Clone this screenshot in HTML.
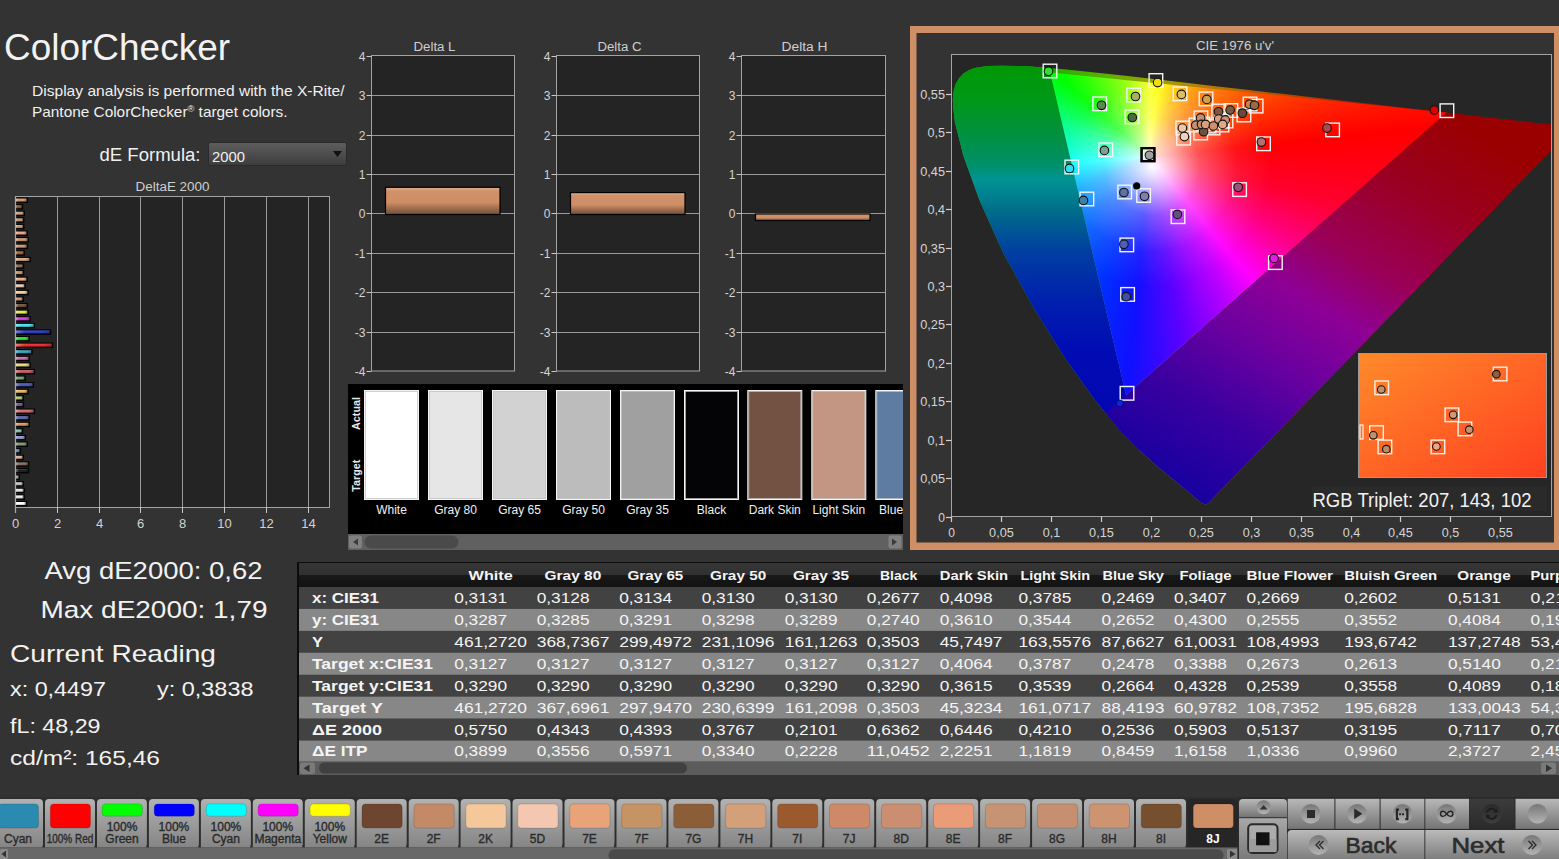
<!DOCTYPE html>
<html><head><meta charset="utf-8"><style>
html,body{margin:0;padding:0;}
body{width:1559px;height:859px;overflow:hidden;background:#333333;position:relative;font-family:"Liberation Sans", sans-serif;}
svg text{font-family:"Liberation Sans", sans-serif;}
</style></head><body>
<svg width="1559" height="859" style="position:absolute;left:0;top:0"><rect x="910" y="26" width="652" height="524" fill="#cf8f66"/><rect x="916.5" y="33" width="637.5" height="509.5" fill="#333333"/><rect x="951" y="54" width="601" height="463" fill="#262626"/></svg><div style="position:absolute;left:951px;top:54px;width:601px;height:463px;overflow:hidden">
<svg width="700" height="480" style="position:absolute;left:0;top:0"><defs>
<clipPath id="locclip"><path d="M256.7,449.8 L256.3,450.1 L255.6,450.4 L254.4,450.4 L252.1,449.6 L249.5,447.9 L246.0,445.2 L241.0,441.1 L234.6,435.7 L226.6,429.0 L216.0,420.4 L203.3,409.7 L187.7,395.7 L169.0,376.6 L144.2,346.6 L114.9,305.5 L83.0,254.5 L52.4,199.2 L28.5,146.2 L12.3,101.5 L3.9,68.3 L2.4,55.3 L1.8,45.2 L2.7,36.6 L5.0,29.3 L8.5,23.7 L12.7,19.2 L17.8,16.3 L23.5,14.1 L36.3,12.1 L50.4,11.7 L64.6,11.9 L79.5,12.6 L95.5,13.7 L112.9,15.3 L132.0,17.2 L153.2,19.5 L176.6,22.1 L202.6,25.0 L231.1,28.3 L262.2,31.9 L295.8,35.8 L331.3,39.8 L367.7,44.1 L403.1,48.1 L468.6,55.6 L519.6,61.5 L555.8,65.7 L582.3,68.7 L599.7,70.7 L610.1,71.9 L622.5,73.4 Z"/></clipPath>
<linearGradient id="lgL" gradientUnits="userSpaceOnUse" x1="0" y1="0" x2="0" y2="416"><stop offset="0" stop-color="#009800"/><stop offset="0.11" stop-color="#009818"/><stop offset="0.195" stop-color="#009040"/><stop offset="0.267" stop-color="#00906a"/><stop offset="0.303" stop-color="#009494"/><stop offset="0.375" stop-color="#006e8a"/><stop offset="0.471" stop-color="#0040a0"/><stop offset="0.591" stop-color="#0020ae"/><stop offset="0.71" stop-color="#000cb4"/><stop offset="1" stop-color="#0800b0"/></linearGradient>
<linearGradient id="lgR" gradientUnits="userSpaceOnUse" x1="495.4" y1="58.4" x2="256.7" y2="449.8"><stop offset="0" stop-color="#9a0000"/><stop offset="0.18" stop-color="#9a0020"/><stop offset="0.376" stop-color="#9a0058"/><stop offset="0.505" stop-color="#8e0096"/><stop offset="0.657" stop-color="#6a00a0"/><stop offset="0.816" stop-color="#3c00a0"/><stop offset="1" stop-color="#1800a0"/></linearGradient>
<linearGradient id="lgT" gradientUnits="userSpaceOnUse" x1="99.2" y1="0" x2="495.4" y2="0"><stop offset="0" stop-color="#20b000"/><stop offset="0.15" stop-color="#60b000"/><stop offset="0.27" stop-color="#a0a000"/><stop offset="0.45" stop-color="#b87000"/><stop offset="0.7" stop-color="#b03000"/><stop offset="1" stop-color="#a00000"/></linearGradient>
</defs><g clip-path="url(#locclip)"><rect x="-20" y="-20" width="740" height="520" fill="url(#lgT)"/><polygon points="90.2,-20.0 212.4,500.0 -20,500 -20,-20" fill="url(#lgL)"/><polygon points="584.2,-20.0 -4.9,500.0 720,500 720,-20" fill="url(#lgR)"/></g></svg>
<div style="position:absolute;left:0;top:0;width:700px;height:480px;clip-path:polygon(495.4px 58.4px, 99.2px 18.4px, 175.0px 341.2px);background:radial-gradient(circle at 200.8px 112.7px, rgba(255,255,255,1) 0px, rgba(255,255,255,0.72) 20px, rgba(255,255,255,0.32) 48px, rgba(255,255,255,0.08) 85px, rgba(255,255,255,0) 120px),conic-gradient(from 0deg at 197.8px 102.7px, #f8ff20 0deg, #ffff00 8deg, #ffc000 22deg, #ff8000 40deg, #ff4800 63deg, #ff0000 84deg, #ff0030 104deg, #ff0080 120deg, #ff00ff 140deg, #c000ff 150deg, #9000ff 160deg, #6000ff 169deg, #1010ff 185deg, #0030ff 200deg, #0060ff 222deg, #00a8ff 246deg, #00ffff 265deg, #00ff90 290deg, #00ff00 312deg, #90ff00 343deg, #f8ff20 360deg)"></div>
</div><svg class="ov" width="1559" height="859" style="position:absolute;left:0;top:0"><defs><linearGradient id="ddg" x1="0" y1="0" x2="0" y2="1"><stop offset="0" stop-color="#5e5e5e"/><stop offset="1" stop-color="#3c3c3c"/></linearGradient><linearGradient id="barg" x1="0" y1="0" x2="1" y2="0"><stop offset="0" stop-color="#fff" stop-opacity="0.35"/><stop offset="0.25" stop-color="#fff" stop-opacity="0"/><stop offset="0.75" stop-color="#000" stop-opacity="0"/><stop offset="1" stop-color="#000" stop-opacity="0.35"/></linearGradient><linearGradient id="dbarg" x1="0" y1="0" x2="0" y2="1"><stop offset="0" stop-color="#e0b090"/><stop offset="0.15" stop-color="#d09068"/><stop offset="0.55" stop-color="#cf8f66"/><stop offset="1" stop-color="#6e4c38"/></linearGradient><clipPath id="swclip"><rect x="348" y="384" width="555" height="150"/></clipPath><linearGradient id="insg" x1="0" y1="0" x2="1" y2="1"><stop offset="0" stop-color="#ff8a2a"/><stop offset="1" stop-color="#ff4020"/></linearGradient><linearGradient id="hdrg" x1="0" y1="0" x2="0" y2="1"><stop offset="0" stop-color="#363636"/><stop offset="0.5" stop-color="#303030"/><stop offset="0.52" stop-color="#181818"/><stop offset="1" stop-color="#121212"/></linearGradient><linearGradient id="tabg" x1="0" y1="0" x2="0" y2="1"><stop offset="0" stop-color="#b2b2b2"/><stop offset="1" stop-color="#858585"/></linearGradient><linearGradient id="btng" x1="0" y1="0" x2="0" y2="1"><stop offset="0" stop-color="#b8b8b8"/><stop offset="1" stop-color="#747474"/></linearGradient><linearGradient id="btng2" x1="0" y1="0" x2="0" y2="1"><stop offset="0" stop-color="#a8a8a8"/><stop offset="1" stop-color="#7a7a7a"/></linearGradient><linearGradient id="btng3" x1="0" y1="0" x2="0" y2="1"><stop offset="0" stop-color="#bababa"/><stop offset="1" stop-color="#7e7e7e"/></linearGradient><linearGradient id="darkg" x1="0" y1="0" x2="0" y2="1"><stop offset="0" stop-color="#3c3c3c"/><stop offset="1" stop-color="#2a2a2a"/></linearGradient><linearGradient id="circg" x1="0" y1="0" x2="0" y2="1"><stop offset="0" stop-color="#777"/><stop offset="1" stop-color="#b4b4b4"/></linearGradient><linearGradient id="circd" x1="0" y1="0" x2="0" y2="1"><stop offset="0" stop-color="#2a2a2a"/><stop offset="1" stop-color="#3e3e3e"/></linearGradient><linearGradient id="bargv" x1="0" y1="0" x2="0" y2="1"><stop offset="0" stop-color="#fff" stop-opacity="0.25"/><stop offset="0.5" stop-color="#fff" stop-opacity="0.05"/><stop offset="1" stop-color="#000" stop-opacity="0.3"/></linearGradient></defs><text x="4.0" y="60.0" font-size="37.5" fill="#f2f2f2" text-anchor="start" font-weight="normal" textLength="226.0" lengthAdjust="spacingAndGlyphs" >ColorChecker</text><text x="32.0" y="95.8" font-size="15" fill="#f0f0f0" text-anchor="start" font-weight="normal" textLength="312.5" lengthAdjust="spacingAndGlyphs" >Display analysis is performed with the X-Rite/</text><text x="32.0" y="116.6" font-size="15" fill="#f0f0f0" text-anchor="start" font-weight="normal" textLength="255.5" lengthAdjust="spacingAndGlyphs" >Pantone ColorChecker<tspan font-size="9" dy="-5">®</tspan><tspan dy="5"> target colors.</tspan></text><text x="99.5" y="160.8" font-size="18" fill="#f0f0f0" text-anchor="start" font-weight="normal" textLength="101.0" lengthAdjust="spacingAndGlyphs" >dE Formula:</text><rect x="208.5" y="142.5" width="138" height="23" rx="2" fill="url(#ddg)" stroke="#2a2a2a" stroke-width="1"/><text x="212.0" y="161.7" font-size="15" fill="#f0f0f0" text-anchor="start" font-weight="normal" textLength="33.0" lengthAdjust="spacingAndGlyphs" >2000</text><path d="M333,151 L342,151 L337.5,157 Z" fill="#111"/><text x="172.5" y="190.5" font-size="12" fill="#cfcfcf" text-anchor="middle" font-weight="normal" textLength="74.0" lengthAdjust="spacingAndGlyphs" >DeltaE 2000</text><rect x="15.5" y="196.5" width="314" height="311" fill="#242424" stroke="#a3a3a3" stroke-width="1"/><line x1="15.5" y1="507" x2="15.5" y2="513" stroke="#c8c8c8" stroke-width="1"/><text x="15.5" y="528.0" font-size="13" fill="#d2d2d2" text-anchor="middle" font-weight="normal" >0</text><line x1="57.5" y1="197" x2="57.5" y2="507" stroke="#9a9a9a" stroke-width="1"/><line x1="57.5" y1="507" x2="57.5" y2="513" stroke="#c8c8c8" stroke-width="1"/><text x="57.5" y="528.0" font-size="13" fill="#d2d2d2" text-anchor="middle" font-weight="normal" >2</text><line x1="99.5" y1="197" x2="99.5" y2="507" stroke="#9a9a9a" stroke-width="1"/><line x1="99.5" y1="507" x2="99.5" y2="513" stroke="#c8c8c8" stroke-width="1"/><text x="99.5" y="528.0" font-size="13" fill="#d2d2d2" text-anchor="middle" font-weight="normal" >4</text><line x1="140.5" y1="197" x2="140.5" y2="507" stroke="#9a9a9a" stroke-width="1"/><line x1="140.5" y1="507" x2="140.5" y2="513" stroke="#c8c8c8" stroke-width="1"/><text x="140.5" y="528.0" font-size="13" fill="#d2d2d2" text-anchor="middle" font-weight="normal" >6</text><line x1="182.5" y1="197" x2="182.5" y2="507" stroke="#9a9a9a" stroke-width="1"/><line x1="182.5" y1="507" x2="182.5" y2="513" stroke="#c8c8c8" stroke-width="1"/><text x="182.5" y="528.0" font-size="13" fill="#d2d2d2" text-anchor="middle" font-weight="normal" >8</text><line x1="224.5" y1="197" x2="224.5" y2="507" stroke="#9a9a9a" stroke-width="1"/><line x1="224.5" y1="507" x2="224.5" y2="513" stroke="#c8c8c8" stroke-width="1"/><text x="224.5" y="528.0" font-size="13" fill="#d2d2d2" text-anchor="middle" font-weight="normal" >10</text><line x1="266.5" y1="197" x2="266.5" y2="507" stroke="#9a9a9a" stroke-width="1"/><line x1="266.5" y1="507" x2="266.5" y2="513" stroke="#c8c8c8" stroke-width="1"/><text x="266.5" y="528.0" font-size="13" fill="#d2d2d2" text-anchor="middle" font-weight="normal" >12</text><line x1="308.5" y1="197" x2="308.5" y2="507" stroke="#9a9a9a" stroke-width="1"/><line x1="308.5" y1="507" x2="308.5" y2="513" stroke="#c8c8c8" stroke-width="1"/><text x="308.5" y="528.0" font-size="13" fill="#d2d2d2" text-anchor="middle" font-weight="normal" >14</text><rect x="16" y="197.40" width="12.1" height="5.6" fill="#050505"/><rect x="16" y="198.60" width="10.5" height="3.0" fill="#cf8f66"/><rect x="16" y="198.60" width="10.5" height="3.0" fill="url(#barg)"/><rect x="16" y="198.60" width="10.5" height="3.0" fill="url(#bargv)"/><rect x="16" y="204.00" width="7.2" height="5.6" fill="#050505"/><rect x="16" y="205.20" width="5.6" height="3.0" fill="#76502e"/><rect x="16" y="205.20" width="5.6" height="3.0" fill="url(#barg)"/><rect x="16" y="205.20" width="5.6" height="3.0" fill="url(#bargv)"/><rect x="16" y="210.59" width="9.0" height="5.6" fill="#050505"/><rect x="16" y="211.79" width="7.4" height="3.0" fill="#cc9470"/><rect x="16" y="211.79" width="7.4" height="3.0" fill="url(#barg)"/><rect x="16" y="211.79" width="7.4" height="3.0" fill="url(#bargv)"/><rect x="16" y="217.19" width="8.4" height="5.6" fill="#050505"/><rect x="16" y="218.39" width="6.8" height="3.0" fill="#c69070"/><rect x="16" y="218.39" width="6.8" height="3.0" fill="url(#barg)"/><rect x="16" y="218.39" width="6.8" height="3.0" fill="url(#bargv)"/><rect x="16" y="223.78" width="8.4" height="5.6" fill="#050505"/><rect x="16" y="224.98" width="6.8" height="3.0" fill="#c69472"/><rect x="16" y="224.98" width="6.8" height="3.0" fill="url(#barg)"/><rect x="16" y="224.98" width="6.8" height="3.0" fill="url(#bargv)"/><rect x="16" y="230.38" width="11.9" height="5.6" fill="#050505"/><rect x="16" y="231.58" width="10.3" height="3.0" fill="#ea9c78"/><rect x="16" y="231.58" width="10.3" height="3.0" fill="url(#barg)"/><rect x="16" y="231.58" width="10.3" height="3.0" fill="url(#bargv)"/><rect x="16" y="236.98" width="13.0" height="5.6" fill="#050505"/><rect x="16" y="238.18" width="11.4" height="3.0" fill="#cc8e70"/><rect x="16" y="238.18" width="11.4" height="3.0" fill="url(#barg)"/><rect x="16" y="238.18" width="11.4" height="3.0" fill="url(#bargv)"/><rect x="16" y="243.57" width="12.1" height="5.6" fill="#050505"/><rect x="16" y="244.77" width="10.5" height="3.0" fill="#ce8a68"/><rect x="16" y="244.77" width="10.5" height="3.0" fill="url(#barg)"/><rect x="16" y="244.77" width="10.5" height="3.0" fill="url(#bargv)"/><rect x="16" y="250.17" width="9.0" height="5.6" fill="#050505"/><rect x="16" y="251.37" width="7.4" height="3.0" fill="#9a5a2e"/><rect x="16" y="251.37" width="7.4" height="3.0" fill="url(#barg)"/><rect x="16" y="251.37" width="7.4" height="3.0" fill="url(#bargv)"/><rect x="16" y="256.76" width="14.9" height="5.6" fill="#050505"/><rect x="16" y="257.96" width="13.3" height="3.0" fill="#d4a07a"/><rect x="16" y="257.96" width="13.3" height="3.0" fill="url(#barg)"/><rect x="16" y="257.96" width="13.3" height="3.0" fill="url(#bargv)"/><rect x="16" y="263.36" width="8.2" height="5.6" fill="#050505"/><rect x="16" y="264.56" width="6.6" height="3.0" fill="#8c5e38"/><rect x="16" y="264.56" width="6.6" height="3.0" fill="url(#barg)"/><rect x="16" y="264.56" width="6.6" height="3.0" fill="url(#bargv)"/><rect x="16" y="269.96" width="8.2" height="5.6" fill="#050505"/><rect x="16" y="271.16" width="6.6" height="3.0" fill="#c69464"/><rect x="16" y="271.16" width="6.6" height="3.0" fill="url(#barg)"/><rect x="16" y="271.16" width="6.6" height="3.0" fill="url(#bargv)"/><rect x="16" y="276.55" width="11.9" height="5.6" fill="#050505"/><rect x="16" y="277.75" width="10.3" height="3.0" fill="#e8a478"/><rect x="16" y="277.75" width="10.3" height="3.0" fill="url(#barg)"/><rect x="16" y="277.75" width="10.3" height="3.0" fill="url(#bargv)"/><rect x="16" y="283.15" width="9.8" height="5.6" fill="#050505"/><rect x="16" y="284.35" width="8.2" height="3.0" fill="#f4c8b0"/><rect x="16" y="284.35" width="8.2" height="3.0" fill="url(#barg)"/><rect x="16" y="284.35" width="8.2" height="3.0" fill="url(#bargv)"/><rect x="16" y="289.74" width="12.8" height="5.6" fill="#050505"/><rect x="16" y="290.94" width="11.2" height="3.0" fill="#f4c89a"/><rect x="16" y="290.94" width="11.2" height="3.0" fill="url(#barg)"/><rect x="16" y="290.94" width="11.2" height="3.0" fill="url(#bargv)"/><rect x="16" y="296.34" width="7.9" height="5.6" fill="#050505"/><rect x="16" y="297.54" width="6.3" height="3.0" fill="#c48a68"/><rect x="16" y="297.54" width="6.3" height="3.0" fill="url(#barg)"/><rect x="16" y="297.54" width="6.3" height="3.0" fill="url(#bargv)"/><rect x="16" y="302.94" width="12.1" height="5.6" fill="#050505"/><rect x="16" y="304.14" width="10.5" height="3.0" fill="#6e4630"/><rect x="16" y="304.14" width="10.5" height="3.0" fill="url(#barg)"/><rect x="16" y="304.14" width="10.5" height="3.0" fill="url(#bargv)"/><rect x="16" y="309.53" width="12.8" height="5.6" fill="#050505"/><rect x="16" y="310.73" width="11.2" height="3.0" fill="#e8e840"/><rect x="16" y="310.73" width="11.2" height="3.0" fill="url(#barg)"/><rect x="16" y="310.73" width="11.2" height="3.0" fill="url(#bargv)"/><rect x="16" y="316.13" width="14.9" height="5.6" fill="#050505"/><rect x="16" y="317.33" width="13.3" height="3.0" fill="#d030d0"/><rect x="16" y="317.33" width="13.3" height="3.0" fill="url(#barg)"/><rect x="16" y="317.33" width="13.3" height="3.0" fill="url(#bargv)"/><rect x="16" y="322.72" width="19.1" height="5.6" fill="#050505"/><rect x="16" y="323.92" width="17.5" height="3.0" fill="#30e0f0"/><rect x="16" y="323.92" width="17.5" height="3.0" fill="url(#barg)"/><rect x="16" y="323.92" width="17.5" height="3.0" fill="url(#bargv)"/><rect x="16" y="329.32" width="35.2" height="5.6" fill="#050505"/><rect x="16" y="330.52" width="33.6" height="3.0" fill="#1828d0"/><rect x="16" y="330.52" width="33.6" height="3.0" fill="url(#barg)"/><rect x="16" y="330.52" width="33.6" height="3.0" fill="url(#bargv)"/><rect x="16" y="335.92" width="13.9" height="5.6" fill="#050505"/><rect x="16" y="337.12" width="12.3" height="3.0" fill="#20e020"/><rect x="16" y="337.12" width="12.3" height="3.0" fill="url(#barg)"/><rect x="16" y="337.12" width="12.3" height="3.0" fill="url(#bargv)"/><rect x="16" y="342.51" width="37.2" height="5.6" fill="#050505"/><rect x="16" y="343.71" width="35.6" height="3.0" fill="#e81818"/><rect x="16" y="343.71" width="35.6" height="3.0" fill="url(#barg)"/><rect x="16" y="343.71" width="35.6" height="3.0" fill="url(#bargv)"/><rect x="16" y="349.11" width="16.7" height="5.6" fill="#050505"/><rect x="16" y="350.31" width="15.1" height="3.0" fill="#2a9ec0"/><rect x="16" y="350.31" width="15.1" height="3.0" fill="url(#barg)"/><rect x="16" y="350.31" width="15.1" height="3.0" fill="url(#bargv)"/><rect x="16" y="355.70" width="13.9" height="5.6" fill="#050505"/><rect x="16" y="356.90" width="12.3" height="3.0" fill="#c860a8"/><rect x="16" y="356.90" width="12.3" height="3.0" fill="url(#barg)"/><rect x="16" y="356.90" width="12.3" height="3.0" fill="url(#bargv)"/><rect x="16" y="362.30" width="14.9" height="5.6" fill="#050505"/><rect x="16" y="363.50" width="13.3" height="3.0" fill="#e8d870"/><rect x="16" y="363.50" width="13.3" height="3.0" fill="url(#barg)"/><rect x="16" y="363.50" width="13.3" height="3.0" fill="url(#bargv)"/><rect x="16" y="368.90" width="19.1" height="5.6" fill="#050505"/><rect x="16" y="370.10" width="17.5" height="3.0" fill="#c85058"/><rect x="16" y="370.10" width="17.5" height="3.0" fill="url(#barg)"/><rect x="16" y="370.10" width="17.5" height="3.0" fill="url(#bargv)"/><rect x="16" y="375.49" width="9.8" height="5.6" fill="#050505"/><rect x="16" y="376.69" width="8.2" height="3.0" fill="#60a060"/><rect x="16" y="376.69" width="8.2" height="3.0" fill="url(#barg)"/><rect x="16" y="376.69" width="8.2" height="3.0" fill="url(#bargv)"/><rect x="16" y="382.09" width="18.1" height="5.6" fill="#050505"/><rect x="16" y="383.29" width="16.5" height="3.0" fill="#4050b0"/><rect x="16" y="383.29" width="16.5" height="3.0" fill="url(#barg)"/><rect x="16" y="383.29" width="16.5" height="3.0" fill="url(#bargv)"/><rect x="16" y="388.68" width="12.8" height="5.6" fill="#050505"/><rect x="16" y="389.88" width="11.2" height="3.0" fill="#e8b050"/><rect x="16" y="389.88" width="11.2" height="3.0" fill="url(#barg)"/><rect x="16" y="389.88" width="11.2" height="3.0" fill="url(#bargv)"/><rect x="16" y="395.28" width="7.9" height="5.6" fill="#050505"/><rect x="16" y="396.48" width="6.3" height="3.0" fill="#a8c860"/><rect x="16" y="396.48" width="6.3" height="3.0" fill="url(#barg)"/><rect x="16" y="396.48" width="6.3" height="3.0" fill="url(#bargv)"/><rect x="16" y="401.88" width="8.2" height="5.6" fill="#050505"/><rect x="16" y="403.08" width="6.6" height="3.0" fill="#6a5090"/><rect x="16" y="403.08" width="6.6" height="3.0" fill="url(#barg)"/><rect x="16" y="403.08" width="6.6" height="3.0" fill="url(#bargv)"/><rect x="16" y="408.47" width="19.1" height="5.6" fill="#050505"/><rect x="16" y="409.67" width="17.5" height="3.0" fill="#c86068"/><rect x="16" y="409.67" width="17.5" height="3.0" fill="url(#barg)"/><rect x="16" y="409.67" width="17.5" height="3.0" fill="url(#bargv)"/><rect x="16" y="415.07" width="13.9" height="5.6" fill="#050505"/><rect x="16" y="416.27" width="12.3" height="3.0" fill="#5060b0"/><rect x="16" y="416.27" width="12.3" height="3.0" fill="url(#barg)"/><rect x="16" y="416.27" width="12.3" height="3.0" fill="url(#bargv)"/><rect x="16" y="421.66" width="14.0" height="5.6" fill="#050505"/><rect x="16" y="422.86" width="12.4" height="3.0" fill="#d89050"/><rect x="16" y="422.86" width="12.4" height="3.0" fill="url(#barg)"/><rect x="16" y="422.86" width="12.4" height="3.0" fill="url(#bargv)"/><rect x="16" y="428.26" width="7.2" height="5.6" fill="#050505"/><rect x="16" y="429.46" width="5.6" height="3.0" fill="#70c0b0"/><rect x="16" y="429.46" width="5.6" height="3.0" fill="url(#barg)"/><rect x="16" y="429.46" width="5.6" height="3.0" fill="url(#bargv)"/><rect x="16" y="434.86" width="10.1" height="5.6" fill="#050505"/><rect x="16" y="436.06" width="8.5" height="3.0" fill="#9090d0"/><rect x="16" y="436.06" width="8.5" height="3.0" fill="url(#barg)"/><rect x="16" y="436.06" width="8.5" height="3.0" fill="url(#bargv)"/><rect x="16" y="441.45" width="12.0" height="5.6" fill="#050505"/><rect x="16" y="442.65" width="10.4" height="3.0" fill="#78906a"/><rect x="16" y="442.65" width="10.4" height="3.0" fill="url(#barg)"/><rect x="16" y="442.65" width="10.4" height="3.0" fill="url(#bargv)"/><rect x="16" y="448.05" width="5.1" height="5.6" fill="#050505"/><rect x="16" y="449.25" width="3.5" height="3.0" fill="#6080b0"/><rect x="16" y="449.25" width="3.5" height="3.0" fill="url(#barg)"/><rect x="16" y="449.25" width="3.5" height="3.0" fill="url(#bargv)"/><rect x="16" y="454.64" width="8.0" height="5.6" fill="#050505"/><rect x="16" y="455.84" width="6.4" height="3.0" fill="#d8a890"/><rect x="16" y="455.84" width="6.4" height="3.0" fill="url(#barg)"/><rect x="16" y="455.84" width="6.4" height="3.0" fill="url(#bargv)"/><rect x="16" y="461.24" width="13.3" height="5.6" fill="#050505"/><rect x="16" y="462.44" width="11.7" height="3.0" fill="#806050"/><rect x="16" y="462.44" width="11.7" height="3.0" fill="url(#barg)"/><rect x="16" y="462.44" width="11.7" height="3.0" fill="url(#bargv)"/><rect x="16" y="467.84" width="13.3" height="5.6" fill="#050505"/><rect x="16" y="469.04" width="11.7" height="3.0" fill="#101010"/><rect x="16" y="469.04" width="11.7" height="3.0" fill="url(#barg)"/><rect x="16" y="469.04" width="11.7" height="3.0" fill="url(#bargv)"/><rect x="16" y="474.43" width="4.0" height="5.6" fill="#050505"/><rect x="16" y="475.63" width="2.4" height="3.0" fill="#a0a0a0"/><rect x="16" y="475.63" width="2.4" height="3.0" fill="url(#barg)"/><rect x="16" y="475.63" width="2.4" height="3.0" fill="url(#bargv)"/><rect x="16" y="481.03" width="8.0" height="5.6" fill="#050505"/><rect x="16" y="482.23" width="6.4" height="3.0" fill="#c0c0c0"/><rect x="16" y="482.23" width="6.4" height="3.0" fill="url(#barg)"/><rect x="16" y="482.23" width="6.4" height="3.0" fill="url(#bargv)"/><rect x="16" y="487.62" width="8.9" height="5.6" fill="#050505"/><rect x="16" y="488.82" width="7.3" height="3.0" fill="#e0e0e0"/><rect x="16" y="488.82" width="7.3" height="3.0" fill="url(#barg)"/><rect x="16" y="488.82" width="7.3" height="3.0" fill="url(#bargv)"/><rect x="16" y="494.22" width="8.9" height="5.6" fill="#050505"/><rect x="16" y="495.42" width="7.3" height="3.0" fill="#ececec"/><rect x="16" y="495.42" width="7.3" height="3.0" fill="url(#barg)"/><rect x="16" y="495.42" width="7.3" height="3.0" fill="url(#bargv)"/><rect x="16" y="500.82" width="11.2" height="5.6" fill="#050505"/><rect x="16" y="502.02" width="9.6" height="3.0" fill="#ffffff"/><rect x="16" y="502.02" width="9.6" height="3.0" fill="url(#barg)"/><rect x="16" y="502.02" width="9.6" height="3.0" fill="url(#bargv)"/><line x1="15.5" y1="197" x2="15.5" y2="513" stroke="#a8a8a8" stroke-width="1.2"/><text x="434.5" y="50.8" font-size="12" fill="#cfcfcf" text-anchor="middle" font-weight="normal" textLength="42.0" lengthAdjust="spacingAndGlyphs" >Delta L</text><rect x="371.5" y="55.5" width="143" height="315.5" fill="#242424" stroke="#a3a3a3" stroke-width="1"/><line x1="366.5" y1="56.5" x2="371.5" y2="56.5" stroke="#c8c8c8" stroke-width="1"/><text x="365.5" y="61.3" font-size="12" fill="#d4d4d4" text-anchor="end" font-weight="normal" >4</text><line x1="371.5" y1="95.5" x2="514.5" y2="95.5" stroke="#9a9a9a" stroke-width="1"/><line x1="366.5" y1="95.5" x2="371.5" y2="95.5" stroke="#c8c8c8" stroke-width="1"/><text x="365.5" y="100.3" font-size="12" fill="#d4d4d4" text-anchor="end" font-weight="normal" >3</text><line x1="371.5" y1="135.5" x2="514.5" y2="135.5" stroke="#9a9a9a" stroke-width="1"/><line x1="366.5" y1="135.5" x2="371.5" y2="135.5" stroke="#c8c8c8" stroke-width="1"/><text x="365.5" y="140.3" font-size="12" fill="#d4d4d4" text-anchor="end" font-weight="normal" >2</text><line x1="371.5" y1="174.5" x2="514.5" y2="174.5" stroke="#9a9a9a" stroke-width="1"/><line x1="366.5" y1="174.5" x2="371.5" y2="174.5" stroke="#c8c8c8" stroke-width="1"/><text x="365.5" y="179.3" font-size="12" fill="#d4d4d4" text-anchor="end" font-weight="normal" >1</text><line x1="371.5" y1="213.5" x2="514.5" y2="213.5" stroke="#9a9a9a" stroke-width="1"/><line x1="366.5" y1="213.5" x2="371.5" y2="213.5" stroke="#c8c8c8" stroke-width="1"/><text x="365.5" y="218.3" font-size="12" fill="#d4d4d4" text-anchor="end" font-weight="normal" >0</text><line x1="371.5" y1="253.5" x2="514.5" y2="253.5" stroke="#9a9a9a" stroke-width="1"/><line x1="366.5" y1="253.5" x2="371.5" y2="253.5" stroke="#c8c8c8" stroke-width="1"/><text x="365.5" y="258.3" font-size="12" fill="#d4d4d4" text-anchor="end" font-weight="normal" >-1</text><line x1="371.5" y1="292.5" x2="514.5" y2="292.5" stroke="#9a9a9a" stroke-width="1"/><line x1="366.5" y1="292.5" x2="371.5" y2="292.5" stroke="#c8c8c8" stroke-width="1"/><text x="365.5" y="297.3" font-size="12" fill="#d4d4d4" text-anchor="end" font-weight="normal" >-2</text><line x1="371.5" y1="332.5" x2="514.5" y2="332.5" stroke="#9a9a9a" stroke-width="1"/><line x1="366.5" y1="332.5" x2="371.5" y2="332.5" stroke="#c8c8c8" stroke-width="1"/><text x="365.5" y="337.3" font-size="12" fill="#d4d4d4" text-anchor="end" font-weight="normal" >-3</text><line x1="366.5" y1="371.5" x2="371.5" y2="371.5" stroke="#c8c8c8" stroke-width="1"/><text x="365.5" y="376.3" font-size="12" fill="#d4d4d4" text-anchor="end" font-weight="normal" >-4</text><rect x="385.5" y="187.3" width="114.5" height="27.2" fill="url(#dbarg)" stroke="#000" stroke-width="1.2"/><text x="619.5" y="50.8" font-size="12" fill="#cfcfcf" text-anchor="middle" font-weight="normal" textLength="44.0" lengthAdjust="spacingAndGlyphs" >Delta C</text><rect x="556.5" y="55.5" width="143" height="315.5" fill="#242424" stroke="#a3a3a3" stroke-width="1"/><line x1="551.5" y1="56.5" x2="556.5" y2="56.5" stroke="#c8c8c8" stroke-width="1"/><text x="550.5" y="61.3" font-size="12" fill="#d4d4d4" text-anchor="end" font-weight="normal" >4</text><line x1="556.5" y1="95.5" x2="699.5" y2="95.5" stroke="#9a9a9a" stroke-width="1"/><line x1="551.5" y1="95.5" x2="556.5" y2="95.5" stroke="#c8c8c8" stroke-width="1"/><text x="550.5" y="100.3" font-size="12" fill="#d4d4d4" text-anchor="end" font-weight="normal" >3</text><line x1="556.5" y1="135.5" x2="699.5" y2="135.5" stroke="#9a9a9a" stroke-width="1"/><line x1="551.5" y1="135.5" x2="556.5" y2="135.5" stroke="#c8c8c8" stroke-width="1"/><text x="550.5" y="140.3" font-size="12" fill="#d4d4d4" text-anchor="end" font-weight="normal" >2</text><line x1="556.5" y1="174.5" x2="699.5" y2="174.5" stroke="#9a9a9a" stroke-width="1"/><line x1="551.5" y1="174.5" x2="556.5" y2="174.5" stroke="#c8c8c8" stroke-width="1"/><text x="550.5" y="179.3" font-size="12" fill="#d4d4d4" text-anchor="end" font-weight="normal" >1</text><line x1="556.5" y1="213.5" x2="699.5" y2="213.5" stroke="#9a9a9a" stroke-width="1"/><line x1="551.5" y1="213.5" x2="556.5" y2="213.5" stroke="#c8c8c8" stroke-width="1"/><text x="550.5" y="218.3" font-size="12" fill="#d4d4d4" text-anchor="end" font-weight="normal" >0</text><line x1="556.5" y1="253.5" x2="699.5" y2="253.5" stroke="#9a9a9a" stroke-width="1"/><line x1="551.5" y1="253.5" x2="556.5" y2="253.5" stroke="#c8c8c8" stroke-width="1"/><text x="550.5" y="258.3" font-size="12" fill="#d4d4d4" text-anchor="end" font-weight="normal" >-1</text><line x1="556.5" y1="292.5" x2="699.5" y2="292.5" stroke="#9a9a9a" stroke-width="1"/><line x1="551.5" y1="292.5" x2="556.5" y2="292.5" stroke="#c8c8c8" stroke-width="1"/><text x="550.5" y="297.3" font-size="12" fill="#d4d4d4" text-anchor="end" font-weight="normal" >-2</text><line x1="556.5" y1="332.5" x2="699.5" y2="332.5" stroke="#9a9a9a" stroke-width="1"/><line x1="551.5" y1="332.5" x2="556.5" y2="332.5" stroke="#c8c8c8" stroke-width="1"/><text x="550.5" y="337.3" font-size="12" fill="#d4d4d4" text-anchor="end" font-weight="normal" >-3</text><line x1="551.5" y1="371.5" x2="556.5" y2="371.5" stroke="#c8c8c8" stroke-width="1"/><text x="550.5" y="376.3" font-size="12" fill="#d4d4d4" text-anchor="end" font-weight="normal" >-4</text><rect x="570.5" y="192.6" width="114.5" height="21.9" fill="url(#dbarg)" stroke="#000" stroke-width="1.2"/><text x="804.5" y="50.8" font-size="12" fill="#cfcfcf" text-anchor="middle" font-weight="normal" textLength="46.0" lengthAdjust="spacingAndGlyphs" >Delta H</text><rect x="741.5" y="55.5" width="144" height="315.5" fill="#242424" stroke="#a3a3a3" stroke-width="1"/><line x1="736.5" y1="56.5" x2="741.5" y2="56.5" stroke="#c8c8c8" stroke-width="1"/><text x="735.5" y="61.3" font-size="12" fill="#d4d4d4" text-anchor="end" font-weight="normal" >4</text><line x1="741.5" y1="95.5" x2="885.5" y2="95.5" stroke="#9a9a9a" stroke-width="1"/><line x1="736.5" y1="95.5" x2="741.5" y2="95.5" stroke="#c8c8c8" stroke-width="1"/><text x="735.5" y="100.3" font-size="12" fill="#d4d4d4" text-anchor="end" font-weight="normal" >3</text><line x1="741.5" y1="135.5" x2="885.5" y2="135.5" stroke="#9a9a9a" stroke-width="1"/><line x1="736.5" y1="135.5" x2="741.5" y2="135.5" stroke="#c8c8c8" stroke-width="1"/><text x="735.5" y="140.3" font-size="12" fill="#d4d4d4" text-anchor="end" font-weight="normal" >2</text><line x1="741.5" y1="174.5" x2="885.5" y2="174.5" stroke="#9a9a9a" stroke-width="1"/><line x1="736.5" y1="174.5" x2="741.5" y2="174.5" stroke="#c8c8c8" stroke-width="1"/><text x="735.5" y="179.3" font-size="12" fill="#d4d4d4" text-anchor="end" font-weight="normal" >1</text><line x1="741.5" y1="213.5" x2="885.5" y2="213.5" stroke="#9a9a9a" stroke-width="1"/><line x1="736.5" y1="213.5" x2="741.5" y2="213.5" stroke="#c8c8c8" stroke-width="1"/><text x="735.5" y="218.3" font-size="12" fill="#d4d4d4" text-anchor="end" font-weight="normal" >0</text><line x1="741.5" y1="253.5" x2="885.5" y2="253.5" stroke="#9a9a9a" stroke-width="1"/><line x1="736.5" y1="253.5" x2="741.5" y2="253.5" stroke="#c8c8c8" stroke-width="1"/><text x="735.5" y="258.3" font-size="12" fill="#d4d4d4" text-anchor="end" font-weight="normal" >-1</text><line x1="741.5" y1="292.5" x2="885.5" y2="292.5" stroke="#9a9a9a" stroke-width="1"/><line x1="736.5" y1="292.5" x2="741.5" y2="292.5" stroke="#c8c8c8" stroke-width="1"/><text x="735.5" y="297.3" font-size="12" fill="#d4d4d4" text-anchor="end" font-weight="normal" >-2</text><line x1="741.5" y1="332.5" x2="885.5" y2="332.5" stroke="#9a9a9a" stroke-width="1"/><line x1="736.5" y1="332.5" x2="741.5" y2="332.5" stroke="#c8c8c8" stroke-width="1"/><text x="735.5" y="337.3" font-size="12" fill="#d4d4d4" text-anchor="end" font-weight="normal" >-3</text><line x1="736.5" y1="371.5" x2="741.5" y2="371.5" stroke="#c8c8c8" stroke-width="1"/><text x="735.5" y="376.3" font-size="12" fill="#d4d4d4" text-anchor="end" font-weight="normal" >-4</text><rect x="755.5" y="214.0" width="114.5" height="6.5" fill="url(#dbarg)" stroke="#000" stroke-width="1.2"/><rect x="348" y="384" width="555" height="150" fill="#000"/><text x="0" y="0" font-size="11" font-weight="bold" fill="#e8e8e8" text-anchor="middle" transform="translate(359.8,413.5) rotate(-90)" textLength="33" lengthAdjust="spacingAndGlyphs">Actual</text><text x="0" y="0" font-size="11" font-weight="bold" fill="#e8e8e8" text-anchor="middle" transform="translate(359.8,475.7) rotate(-90)" textLength="32" lengthAdjust="spacingAndGlyphs">Target</text><g clip-path="url(#swclip)"><rect x="364.5" y="390.5" width="54" height="109" fill="#ffffff" stroke="#f4f4f4" stroke-width="1"/><rect x="365.5" y="391.5" width="52" height="107" fill="none" stroke="#c4c4c4" stroke-width="0.8"/><text x="391.5" y="514.0" font-size="12" fill="#f0f0f0" text-anchor="middle" font-weight="normal" >White</text><rect x="428.5" y="390.5" width="54" height="109" fill="#e6e6e6" stroke="#f4f4f4" stroke-width="1"/><rect x="429.5" y="391.5" width="52" height="107" fill="none" stroke="#c4c4c4" stroke-width="0.8"/><text x="455.5" y="514.0" font-size="12" fill="#f0f0f0" text-anchor="middle" font-weight="normal" >Gray 80</text><rect x="492.5" y="390.5" width="54" height="109" fill="#d2d2d2" stroke="#f4f4f4" stroke-width="1"/><rect x="493.5" y="391.5" width="52" height="107" fill="none" stroke="#c4c4c4" stroke-width="0.8"/><text x="519.5" y="514.0" font-size="12" fill="#f0f0f0" text-anchor="middle" font-weight="normal" >Gray 65</text><rect x="556.5" y="390.5" width="54" height="109" fill="#bcbcbc" stroke="#f4f4f4" stroke-width="1"/><rect x="557.5" y="391.5" width="52" height="107" fill="none" stroke="#c4c4c4" stroke-width="0.8"/><text x="583.5" y="514.0" font-size="12" fill="#f0f0f0" text-anchor="middle" font-weight="normal" >Gray 50</text><rect x="620.5" y="390.5" width="54" height="109" fill="#a0a0a0" stroke="#f4f4f4" stroke-width="1"/><rect x="621.5" y="391.5" width="52" height="107" fill="none" stroke="#c4c4c4" stroke-width="0.8"/><text x="647.5" y="514.0" font-size="12" fill="#f0f0f0" text-anchor="middle" font-weight="normal" >Gray 35</text><rect x="684.5" y="390.5" width="54" height="109" fill="#040406" stroke="#f4f4f4" stroke-width="1"/><rect x="685.5" y="391.5" width="52" height="107" fill="none" stroke="#c4c4c4" stroke-width="0.8"/><text x="711.5" y="514.0" font-size="12" fill="#f0f0f0" text-anchor="middle" font-weight="normal" >Black</text><rect x="747.8" y="390.5" width="54" height="109" fill="#735244" stroke="#f4f4f4" stroke-width="1"/><rect x="748.8" y="391.5" width="52" height="107" fill="none" stroke="#c4c4c4" stroke-width="0.8"/><text x="774.8" y="514.0" font-size="12" fill="#f0f0f0" text-anchor="middle" font-weight="normal" >Dark Skin</text><rect x="811.8" y="390.5" width="54" height="109" fill="#c29682" stroke="#f4f4f4" stroke-width="1"/><rect x="812.8" y="391.5" width="52" height="107" fill="none" stroke="#c4c4c4" stroke-width="0.8"/><text x="838.8" y="514.0" font-size="12" fill="#f0f0f0" text-anchor="middle" font-weight="normal" >Light Skin</text><rect x="875.8" y="390.5" width="54" height="109" fill="#5e7ba2" stroke="#f4f4f4" stroke-width="1"/><rect x="876.8" y="391.5" width="52" height="107" fill="none" stroke="#c4c4c4" stroke-width="0.8"/><text x="902.8" y="514.0" font-size="12" fill="#f0f0f0" text-anchor="middle" font-weight="normal" >Blue Sky</text></g><rect x="348" y="534" width="555" height="16" fill="#606060"/><rect x="349" y="535.5" width="13" height="13" rx="2" fill="#808080"/><path d="M353,542 L358,538.5 L358,545.5 Z" fill="#3a3a3a"/><rect x="364.5" y="535.5" width="94" height="13" rx="6.5" fill="#4a4a4a"/><rect x="888.5" y="535.5" width="13" height="13" rx="2" fill="#808080"/><path d="M897,542 L892,538.5 L892,545.5 Z" fill="#3a3a3a"/><text x="44.5" y="579.3" font-size="24.5" fill="#f2f2f2" text-anchor="start" font-weight="normal" textLength="218.0" lengthAdjust="spacingAndGlyphs" >Avg dE2000: 0,62</text><text x="40.5" y="617.9" font-size="24.5" fill="#f2f2f2" text-anchor="start" font-weight="normal" textLength="227.0" lengthAdjust="spacingAndGlyphs" >Max dE2000: 1,79</text><text x="10.0" y="662.3" font-size="24" fill="#f2f2f2" text-anchor="start" font-weight="normal" textLength="206.0" lengthAdjust="spacingAndGlyphs" >Current Reading</text><text x="10.0" y="695.8" font-size="20" fill="#f2f2f2" text-anchor="start" font-weight="normal" textLength="96.0" lengthAdjust="spacingAndGlyphs" >x: 0,4497</text><text x="157.0" y="695.8" font-size="20" fill="#f2f2f2" text-anchor="start" font-weight="normal" textLength="96.5" lengthAdjust="spacingAndGlyphs" >y: 0,3838</text><text x="10.0" y="733.0" font-size="20" fill="#f2f2f2" text-anchor="start" font-weight="normal" textLength="90.5" lengthAdjust="spacingAndGlyphs" >fL: 48,29</text><text x="10.0" y="765.0" font-size="20" fill="#f2f2f2" text-anchor="start" font-weight="normal" textLength="150.0" lengthAdjust="spacingAndGlyphs" >cd/m²: 165,46</text><text x="1235.0" y="50.4" font-size="12" fill="#cfcfcf" text-anchor="middle" font-weight="normal" textLength="78.0" lengthAdjust="spacingAndGlyphs" >CIE 1976 u'v'</text><rect x="951.5" y="54.5" width="600" height="462" fill="none" stroke="#a3a3a3" stroke-width="1"/><line x1="946" y1="517.5" x2="951.5" y2="517.5" stroke="#d0d0d0" stroke-width="1.2"/><text x="945.0" y="521.9" font-size="12.5" fill="#d4d4d4" text-anchor="end" font-weight="normal" textLength="6.7" lengthAdjust="spacingAndGlyphs" >0</text><line x1="951.5" y1="516.5" x2="951.5" y2="522" stroke="#d0d0d0" stroke-width="1.2"/><text x="951.5" y="537.0" font-size="12.5" fill="#d4d4d4" text-anchor="middle" font-weight="normal" textLength="6.7" lengthAdjust="spacingAndGlyphs" >0</text><line x1="946" y1="478.5" x2="951.5" y2="478.5" stroke="#d0d0d0" stroke-width="1.2"/><text x="945.0" y="482.9" font-size="12.5" fill="#d4d4d4" text-anchor="end" font-weight="normal" textLength="24.8" lengthAdjust="spacingAndGlyphs" >0,05</text><line x1="1001.5" y1="516.5" x2="1001.5" y2="522" stroke="#d0d0d0" stroke-width="1.2"/><text x="1001.5" y="537.0" font-size="12.5" fill="#d4d4d4" text-anchor="middle" font-weight="normal" textLength="24.8" lengthAdjust="spacingAndGlyphs" >0,05</text><line x1="946" y1="440.5" x2="951.5" y2="440.5" stroke="#d0d0d0" stroke-width="1.2"/><text x="945.0" y="444.9" font-size="12.5" fill="#d4d4d4" text-anchor="end" font-weight="normal" textLength="17.5" lengthAdjust="spacingAndGlyphs" >0,1</text><line x1="1051.5" y1="516.5" x2="1051.5" y2="522" stroke="#d0d0d0" stroke-width="1.2"/><text x="1051.5" y="537.0" font-size="12.5" fill="#d4d4d4" text-anchor="middle" font-weight="normal" textLength="17.5" lengthAdjust="spacingAndGlyphs" >0,1</text><line x1="946" y1="401.5" x2="951.5" y2="401.5" stroke="#d0d0d0" stroke-width="1.2"/><text x="945.0" y="405.9" font-size="12.5" fill="#d4d4d4" text-anchor="end" font-weight="normal" textLength="24.8" lengthAdjust="spacingAndGlyphs" >0,15</text><line x1="1101.5" y1="516.5" x2="1101.5" y2="522" stroke="#d0d0d0" stroke-width="1.2"/><text x="1101.5" y="537.0" font-size="12.5" fill="#d4d4d4" text-anchor="middle" font-weight="normal" textLength="24.8" lengthAdjust="spacingAndGlyphs" >0,15</text><line x1="946" y1="363.5" x2="951.5" y2="363.5" stroke="#d0d0d0" stroke-width="1.2"/><text x="945.0" y="367.9" font-size="12.5" fill="#d4d4d4" text-anchor="end" font-weight="normal" textLength="17.5" lengthAdjust="spacingAndGlyphs" >0,2</text><line x1="1151.5" y1="516.5" x2="1151.5" y2="522" stroke="#d0d0d0" stroke-width="1.2"/><text x="1151.5" y="537.0" font-size="12.5" fill="#d4d4d4" text-anchor="middle" font-weight="normal" textLength="17.5" lengthAdjust="spacingAndGlyphs" >0,2</text><line x1="946" y1="324.5" x2="951.5" y2="324.5" stroke="#d0d0d0" stroke-width="1.2"/><text x="945.0" y="328.9" font-size="12.5" fill="#d4d4d4" text-anchor="end" font-weight="normal" textLength="24.8" lengthAdjust="spacingAndGlyphs" >0,25</text><line x1="1201.5" y1="516.5" x2="1201.5" y2="522" stroke="#d0d0d0" stroke-width="1.2"/><text x="1201.5" y="537.0" font-size="12.5" fill="#d4d4d4" text-anchor="middle" font-weight="normal" textLength="24.8" lengthAdjust="spacingAndGlyphs" >0,25</text><line x1="946" y1="286.5" x2="951.5" y2="286.5" stroke="#d0d0d0" stroke-width="1.2"/><text x="945.0" y="290.9" font-size="12.5" fill="#d4d4d4" text-anchor="end" font-weight="normal" textLength="17.5" lengthAdjust="spacingAndGlyphs" >0,3</text><line x1="1251.5" y1="516.5" x2="1251.5" y2="522" stroke="#d0d0d0" stroke-width="1.2"/><text x="1251.5" y="537.0" font-size="12.5" fill="#d4d4d4" text-anchor="middle" font-weight="normal" textLength="17.5" lengthAdjust="spacingAndGlyphs" >0,3</text><line x1="946" y1="248.5" x2="951.5" y2="248.5" stroke="#d0d0d0" stroke-width="1.2"/><text x="945.0" y="252.9" font-size="12.5" fill="#d4d4d4" text-anchor="end" font-weight="normal" textLength="24.8" lengthAdjust="spacingAndGlyphs" >0,35</text><line x1="1301.5" y1="516.5" x2="1301.5" y2="522" stroke="#d0d0d0" stroke-width="1.2"/><text x="1301.5" y="537.0" font-size="12.5" fill="#d4d4d4" text-anchor="middle" font-weight="normal" textLength="24.8" lengthAdjust="spacingAndGlyphs" >0,35</text><line x1="946" y1="209.5" x2="951.5" y2="209.5" stroke="#d0d0d0" stroke-width="1.2"/><text x="945.0" y="213.9" font-size="12.5" fill="#d4d4d4" text-anchor="end" font-weight="normal" textLength="17.5" lengthAdjust="spacingAndGlyphs" >0,4</text><line x1="1351.5" y1="516.5" x2="1351.5" y2="522" stroke="#d0d0d0" stroke-width="1.2"/><text x="1351.5" y="537.0" font-size="12.5" fill="#d4d4d4" text-anchor="middle" font-weight="normal" textLength="17.5" lengthAdjust="spacingAndGlyphs" >0,4</text><line x1="946" y1="171.5" x2="951.5" y2="171.5" stroke="#d0d0d0" stroke-width="1.2"/><text x="945.0" y="175.9" font-size="12.5" fill="#d4d4d4" text-anchor="end" font-weight="normal" textLength="24.8" lengthAdjust="spacingAndGlyphs" >0,45</text><line x1="1400.5" y1="516.5" x2="1400.5" y2="522" stroke="#d0d0d0" stroke-width="1.2"/><text x="1400.5" y="537.0" font-size="12.5" fill="#d4d4d4" text-anchor="middle" font-weight="normal" textLength="24.8" lengthAdjust="spacingAndGlyphs" >0,45</text><line x1="946" y1="132.5" x2="951.5" y2="132.5" stroke="#d0d0d0" stroke-width="1.2"/><text x="945.0" y="136.9" font-size="12.5" fill="#d4d4d4" text-anchor="end" font-weight="normal" textLength="17.5" lengthAdjust="spacingAndGlyphs" >0,5</text><line x1="1450.5" y1="516.5" x2="1450.5" y2="522" stroke="#d0d0d0" stroke-width="1.2"/><text x="1450.5" y="537.0" font-size="12.5" fill="#d4d4d4" text-anchor="middle" font-weight="normal" textLength="17.5" lengthAdjust="spacingAndGlyphs" >0,5</text><line x1="946" y1="94.5" x2="951.5" y2="94.5" stroke="#d0d0d0" stroke-width="1.2"/><text x="945.0" y="98.9" font-size="12.5" fill="#d4d4d4" text-anchor="end" font-weight="normal" textLength="24.8" lengthAdjust="spacingAndGlyphs" >0,55</text><line x1="1500.5" y1="516.5" x2="1500.5" y2="522" stroke="#d0d0d0" stroke-width="1.2"/><text x="1500.5" y="537.0" font-size="12.5" fill="#d4d4d4" text-anchor="middle" font-weight="normal" textLength="24.8" lengthAdjust="spacingAndGlyphs" >0,55</text><rect x="1043.2" y="64.2" width="13.6" height="13.6" fill="none" stroke="#f4f4f4" stroke-width="1.4"/><rect x="1149.1" y="73.7" width="13.6" height="13.6" fill="none" stroke="#f4f4f4" stroke-width="1.4"/><rect x="1092.9" y="97.0" width="13.6" height="13.6" fill="none" stroke="#f4f4f4" stroke-width="1.4"/><rect x="1126.9" y="88.3" width="13.6" height="13.6" fill="none" stroke="#f4f4f4" stroke-width="1.4"/><rect x="1125.2" y="110.1" width="13.6" height="13.6" fill="none" stroke="#f4f4f4" stroke-width="1.4"/><rect x="1099.0" y="143.0" width="13.6" height="13.6" fill="none" stroke="#f4f4f4" stroke-width="1.4"/><rect x="1065.0" y="160.2" width="13.6" height="13.6" fill="none" stroke="#f4f4f4" stroke-width="1.4"/><rect x="1117.9" y="185.2" width="13.6" height="13.6" fill="none" stroke="#f4f4f4" stroke-width="1.4"/><rect x="1136.8" y="188.7" width="13.6" height="13.6" fill="none" stroke="#f4f4f4" stroke-width="1.4"/><rect x="1080.1" y="192.2" width="13.6" height="13.6" fill="none" stroke="#f4f4f4" stroke-width="1.4"/><rect x="1171.2" y="209.9" width="13.6" height="13.6" fill="none" stroke="#f4f4f4" stroke-width="1.4"/><rect x="1120.0" y="238.1" width="13.6" height="13.6" fill="none" stroke="#f4f4f4" stroke-width="1.4"/><rect x="1232.8" y="182.8" width="13.6" height="13.6" fill="none" stroke="#f4f4f4" stroke-width="1.4"/><rect x="1120.8" y="287.6" width="13.6" height="13.6" fill="none" stroke="#f4f4f4" stroke-width="1.4"/><rect x="1440.1" y="103.9" width="13.6" height="13.6" fill="none" stroke="#f4f4f4" stroke-width="1.4"/><rect x="1325.8" y="123.1" width="13.6" height="13.6" fill="none" stroke="#f4f4f4" stroke-width="1.4"/><rect x="1256.7" y="137.0" width="13.6" height="13.6" fill="none" stroke="#f4f4f4" stroke-width="1.4"/><rect x="1268.6" y="255.8" width="13.6" height="13.6" fill="none" stroke="#f4f4f4" stroke-width="1.4"/><rect x="1173.2" y="87.0" width="13.6" height="13.6" fill="none" stroke="#f4f4f4" stroke-width="1.4"/><rect x="1199.2" y="92.1" width="13.6" height="13.6" fill="none" stroke="#f4f4f4" stroke-width="1.4"/><rect x="1194.1" y="111.1" width="13.6" height="13.6" fill="none" stroke="#f4f4f4" stroke-width="1.4"/><rect x="1211.9" y="104.2" width="13.6" height="13.6" fill="none" stroke="#f4f4f4" stroke-width="1.4"/><rect x="1224.1" y="103.7" width="13.6" height="13.6" fill="none" stroke="#f4f4f4" stroke-width="1.4"/><rect x="1237.1" y="108.2" width="13.6" height="13.6" fill="none" stroke="#f4f4f4" stroke-width="1.4"/><rect x="1243.2" y="97.2" width="13.6" height="13.6" fill="none" stroke="#f4f4f4" stroke-width="1.4"/><rect x="1249.3" y="99.3" width="13.6" height="13.6" fill="none" stroke="#f4f4f4" stroke-width="1.4"/><rect x="1176.0" y="121.2" width="13.6" height="13.6" fill="none" stroke="#f4f4f4" stroke-width="1.4"/><rect x="1176.8" y="131.4" width="13.6" height="13.6" fill="none" stroke="#f4f4f4" stroke-width="1.4"/><rect x="1193.9" y="126.2" width="13.6" height="13.6" fill="none" stroke="#f4f4f4" stroke-width="1.4"/><rect x="1189.2" y="118.2" width="13.6" height="13.6" fill="none" stroke="#f4f4f4" stroke-width="1.4"/><rect x="1196.2" y="117.2" width="13.6" height="13.6" fill="none" stroke="#f4f4f4" stroke-width="1.4"/><rect x="1202.2" y="119.2" width="13.6" height="13.6" fill="none" stroke="#f4f4f4" stroke-width="1.4"/><rect x="1206.2" y="121.2" width="13.6" height="13.6" fill="none" stroke="#f4f4f4" stroke-width="1.4"/><rect x="1215.2" y="114.2" width="13.6" height="13.6" fill="none" stroke="#f4f4f4" stroke-width="1.4"/><rect x="1219.2" y="114.2" width="13.6" height="13.6" fill="none" stroke="#f4f4f4" stroke-width="1.4"/><rect x="1215.2" y="118.2" width="13.6" height="13.6" fill="none" stroke="#f4f4f4" stroke-width="1.4"/><rect x="1141.6" y="148.3" width="12.8" height="12.8" fill="none" stroke="#000" stroke-width="2.6"/><rect x="1143.4" y="150.1" width="9.2" height="9.2" fill="none" stroke="#f4f4f4" stroke-width="1"/><circle cx="1048.5" cy="71.2" r="4.3" fill="#30e030" stroke="#111" stroke-width="1.1"/><circle cx="1157.6" cy="82.6" r="4.3" fill="#f0e000" stroke="#111" stroke-width="1.1"/><circle cx="1101.5" cy="105.3" r="4.3" fill="#5a8a50" stroke="#111" stroke-width="1.1"/><circle cx="1135.5" cy="96.5" r="4.3" fill="#a8b060" stroke="#111" stroke-width="1.1"/><circle cx="1132.3" cy="117.5" r="4.3" fill="#4a6a3a" stroke="#111" stroke-width="1.1"/><circle cx="1104.4" cy="150.4" r="4.3" fill="#80a090" stroke="#111" stroke-width="1.1"/><circle cx="1069.5" cy="168.4" r="4.3" fill="#30e0f0" stroke="#111" stroke-width="1.1"/><circle cx="1123.9" cy="192.5" r="4.3" fill="#6070a0" stroke="#111" stroke-width="1.1"/><circle cx="1144.5" cy="196.3" r="4.3" fill="#8080b0" stroke="#111" stroke-width="1.1"/><circle cx="1083.4" cy="200.4" r="4.3" fill="#3a80a0" stroke="#111" stroke-width="1.1"/><circle cx="1177.4" cy="214.4" r="4.3" fill="#605080" stroke="#111" stroke-width="1.1"/><circle cx="1123.9" cy="244.3" r="4.3" fill="#5060b0" stroke="#111" stroke-width="1.1"/><circle cx="1238.2" cy="187.3" r="4.3" fill="#a05080" stroke="#111" stroke-width="1.1"/><circle cx="1126.2" cy="296.7" r="4.3" fill="#4050a0" stroke="#111" stroke-width="1.1"/><circle cx="1434.3" cy="110.0" r="4.3" fill="#e00000" stroke="#111" stroke-width="1.1"/><circle cx="1327.0" cy="128.1" r="4.3" fill="#b04848" stroke="#111" stroke-width="1.1"/><circle cx="1261.4" cy="142.1" r="4.3" fill="#b07070" stroke="#111" stroke-width="1.1"/><circle cx="1274.0" cy="258.4" r="4.3" fill="#e020e0" stroke="#111" stroke-width="1.1"/><circle cx="1181.4" cy="94.4" r="4.3" fill="#d8c060" stroke="#111" stroke-width="1.1"/><circle cx="1206.8" cy="99.4" r="4.3" fill="#d0a050" stroke="#111" stroke-width="1.1"/><circle cx="1200.6" cy="117.9" r="4.3" fill="#c09070" stroke="#111" stroke-width="1.1"/><circle cx="1218.5" cy="111.8" r="4.3" fill="#805840" stroke="#111" stroke-width="1.1"/><circle cx="1230.1" cy="110.1" r="4.3" fill="#7a5a40" stroke="#111" stroke-width="1.1"/><circle cx="1242.4" cy="113.2" r="4.3" fill="#6a4a38" stroke="#111" stroke-width="1.1"/><circle cx="1249.6" cy="104.2" r="4.3" fill="#c08850" stroke="#111" stroke-width="1.1"/><circle cx="1254.5" cy="105.3" r="4.3" fill="#986a48" stroke="#111" stroke-width="1.1"/><circle cx="1182.4" cy="128.1" r="4.3" fill="#e8c8a8" stroke="#111" stroke-width="1.1"/><circle cx="1184.4" cy="136.6" r="4.3" fill="#f0d0c0" stroke="#111" stroke-width="1.1"/><circle cx="1203.6" cy="131.7" r="4.3" fill="#705040" stroke="#111" stroke-width="1.1"/><circle cx="1195.8" cy="125.2" r="4.3" fill="#c89070" stroke="#111" stroke-width="1.1"/><circle cx="1201.5" cy="124.4" r="4.3" fill="#c09070" stroke="#111" stroke-width="1.1"/><circle cx="1205.6" cy="124.4" r="4.3" fill="#d8a080" stroke="#111" stroke-width="1.1"/><circle cx="1213.4" cy="126.0" r="4.3" fill="#d09070" stroke="#111" stroke-width="1.1"/><circle cx="1218.7" cy="119.1" r="4.3" fill="#d8a080" stroke="#111" stroke-width="1.1"/><circle cx="1225.2" cy="119.9" r="4.3" fill="#c89070" stroke="#111" stroke-width="1.1"/><circle cx="1222.7" cy="124.4" r="4.3" fill="#e0a888" stroke="#111" stroke-width="1.1"/><circle cx="1149.5" cy="155.3" r="4.3" fill="#a0a0a0" stroke="#111" stroke-width="1.1"/><circle cx="1136.7" cy="185.9" r="3.6" fill="#000"/><rect x="1120.2" y="386.5" width="13.6" height="13.6" fill="none" stroke="#f4f4f4" stroke-width="1.4"/><circle cx="1119.8" cy="403.4" r="3.4" fill="#1020f0" stroke="#000a60" stroke-width="0.8"/><rect x="1358.5" y="353.5" width="188" height="124" fill="url(#insg)" stroke="#9a9a9a" stroke-width="1"/><rect x="1493.3" y="367.2" width="13.6" height="13.6" fill="none" stroke="#f8f0e8" stroke-width="1.4"/><rect x="1374.9" y="381.0" width="13.6" height="13.6" fill="none" stroke="#f8f0e8" stroke-width="1.4"/><rect x="1445.1" y="408.0" width="13.6" height="13.6" fill="none" stroke="#f8f0e8" stroke-width="1.4"/><rect x="1458.1" y="422.1" width="13.6" height="13.6" fill="none" stroke="#f8f0e8" stroke-width="1.4"/><rect x="1369.7" y="425.8" width="13.6" height="13.6" fill="none" stroke="#f8f0e8" stroke-width="1.4"/><rect x="1378.1" y="440.1" width="13.6" height="13.6" fill="none" stroke="#f8f0e8" stroke-width="1.4"/><rect x="1431.1" y="440.1" width="13.6" height="13.6" fill="none" stroke="#f8f0e8" stroke-width="1.4"/><circle cx="1496.3" cy="374.2" r="3.8" fill="#8a6040" stroke="#111" stroke-width="1.1"/><circle cx="1381.3" cy="389.5" r="3.8" fill="#c09070" stroke="#111" stroke-width="1.1"/><circle cx="1453.2" cy="414.8" r="3.8" fill="#d09878" stroke="#111" stroke-width="1.1"/><circle cx="1469.3" cy="429.7" r="3.8" fill="#c89070" stroke="#111" stroke-width="1.1"/><circle cx="1373.3" cy="435.3" r="3.8" fill="#c09070" stroke="#111" stroke-width="1.1"/><circle cx="1386.3" cy="449.2" r="3.8" fill="#c08c68" stroke="#111" stroke-width="1.1"/><circle cx="1436.4" cy="446.5" r="3.8" fill="#e8a888" stroke="#111" stroke-width="1.1"/><rect x="1360" y="425" width="3" height="14" fill="none" stroke="#f8f0e8" stroke-width="1.2"/><rect x="1312" y="486" width="235" height="25" fill="#2a2a2a"/><text x="1312.5" y="506.6" font-size="19.5" fill="#f2f2f2" text-anchor="start" font-weight="normal" textLength="219.0" lengthAdjust="spacingAndGlyphs" >RGB Triplet: 207, 143, 102</text><rect x="297" y="562" width="1262" height="213" fill="#0c0c0c"/><rect x="299" y="563" width="1260" height="24" fill="url(#hdrg)"/><rect x="299" y="587.00" width="1260" height="22.23" fill="#424242"/><rect x="299" y="608.93" width="1260" height="22.23" fill="#878787"/><rect x="299" y="630.86" width="1260" height="22.23" fill="#424242"/><rect x="299" y="652.79" width="1260" height="22.23" fill="#878787"/><rect x="299" y="674.72" width="1260" height="22.23" fill="#424242"/><rect x="299" y="696.65" width="1260" height="22.23" fill="#878787"/><rect x="299" y="718.58" width="1260" height="22.23" fill="#424242"/><rect x="299" y="740.51" width="1260" height="22.23" fill="#878787"/><text x="490.7" y="579.8" font-size="12.5" fill="#f4f4f4" text-anchor="middle" font-weight="bold" textLength="44.3" lengthAdjust="spacingAndGlyphs" >White</text><text x="572.9" y="579.8" font-size="12.5" fill="#f4f4f4" text-anchor="middle" font-weight="bold" textLength="56.7" lengthAdjust="spacingAndGlyphs" >Gray 80</text><text x="655.4" y="579.8" font-size="12.5" fill="#f4f4f4" text-anchor="middle" font-weight="bold" textLength="55.9" lengthAdjust="spacingAndGlyphs" >Gray 65</text><text x="738.1" y="579.8" font-size="12.5" fill="#f4f4f4" text-anchor="middle" font-weight="bold" textLength="56.2" lengthAdjust="spacingAndGlyphs" >Gray 50</text><text x="821.0" y="579.8" font-size="12.5" fill="#f4f4f4" text-anchor="middle" font-weight="bold" textLength="56.2" lengthAdjust="spacingAndGlyphs" >Gray 35</text><text x="898.6" y="579.8" font-size="12.5" fill="#f4f4f4" text-anchor="middle" font-weight="bold" textLength="37.3" lengthAdjust="spacingAndGlyphs" >Black</text><text x="973.9" y="579.8" font-size="12.5" fill="#f4f4f4" text-anchor="middle" font-weight="bold" textLength="68.3" lengthAdjust="spacingAndGlyphs" >Dark Skin</text><text x="1055.2" y="579.8" font-size="12.5" fill="#f4f4f4" text-anchor="middle" font-weight="bold" textLength="69.6" lengthAdjust="spacingAndGlyphs" >Light Skin</text><text x="1133.2" y="579.8" font-size="12.5" fill="#f4f4f4" text-anchor="middle" font-weight="bold" textLength="61.5" lengthAdjust="spacingAndGlyphs" >Blue Sky</text><text x="1205.5" y="579.8" font-size="12.5" fill="#f4f4f4" text-anchor="middle" font-weight="bold" textLength="52.1" lengthAdjust="spacingAndGlyphs" >Foliage</text><text x="1289.8" y="579.8" font-size="12.5" fill="#f4f4f4" text-anchor="middle" font-weight="bold" textLength="86.4" lengthAdjust="spacingAndGlyphs" >Blue Flower</text><text x="1390.7" y="579.8" font-size="12.5" fill="#f4f4f4" text-anchor="middle" font-weight="bold" textLength="93.0" lengthAdjust="spacingAndGlyphs" >Bluish Green</text><text x="1484.0" y="579.8" font-size="12.5" fill="#f4f4f4" text-anchor="middle" font-weight="bold" textLength="53.3" lengthAdjust="spacingAndGlyphs" >Orange</text><text x="1578.0" y="579.8" font-size="12.5" fill="#f4f4f4" text-anchor="middle" font-weight="bold" textLength="95.0" lengthAdjust="spacingAndGlyphs" >Purplish Blue</text><text x="312.0" y="602.9" font-size="14" fill="#f4f4f4" text-anchor="start" font-weight="bold" textLength="67.0" lengthAdjust="spacingAndGlyphs" >x: CIE31</text><text x="454.2" y="602.9" font-size="14.3" fill="#f4f4f4" text-anchor="start" font-weight="normal" textLength="52.9" lengthAdjust="spacingAndGlyphs" >0,3131</text><text x="536.7" y="602.9" font-size="14.3" fill="#f4f4f4" text-anchor="start" font-weight="normal" textLength="52.9" lengthAdjust="spacingAndGlyphs" >0,3128</text><text x="619.2" y="602.9" font-size="14.3" fill="#f4f4f4" text-anchor="start" font-weight="normal" textLength="52.9" lengthAdjust="spacingAndGlyphs" >0,3134</text><text x="701.7" y="602.9" font-size="14.3" fill="#f4f4f4" text-anchor="start" font-weight="normal" textLength="52.9" lengthAdjust="spacingAndGlyphs" >0,3130</text><text x="784.7" y="602.9" font-size="14.3" fill="#f4f4f4" text-anchor="start" font-weight="normal" textLength="52.9" lengthAdjust="spacingAndGlyphs" >0,3130</text><text x="866.8" y="602.9" font-size="14.3" fill="#f4f4f4" text-anchor="start" font-weight="normal" textLength="52.9" lengthAdjust="spacingAndGlyphs" >0,2677</text><text x="939.7" y="602.9" font-size="14.3" fill="#f4f4f4" text-anchor="start" font-weight="normal" textLength="52.9" lengthAdjust="spacingAndGlyphs" >0,4098</text><text x="1018.4" y="602.9" font-size="14.3" fill="#f4f4f4" text-anchor="start" font-weight="normal" textLength="52.9" lengthAdjust="spacingAndGlyphs" >0,3785</text><text x="1101.6" y="602.9" font-size="14.3" fill="#f4f4f4" text-anchor="start" font-weight="normal" textLength="52.9" lengthAdjust="spacingAndGlyphs" >0,2469</text><text x="1174.0" y="602.9" font-size="14.3" fill="#f4f4f4" text-anchor="start" font-weight="normal" textLength="52.9" lengthAdjust="spacingAndGlyphs" >0,3407</text><text x="1246.6" y="602.9" font-size="14.3" fill="#f4f4f4" text-anchor="start" font-weight="normal" textLength="52.9" lengthAdjust="spacingAndGlyphs" >0,2669</text><text x="1344.2" y="602.9" font-size="14.3" fill="#f4f4f4" text-anchor="start" font-weight="normal" textLength="52.9" lengthAdjust="spacingAndGlyphs" >0,2602</text><text x="1447.9" y="602.9" font-size="14.3" fill="#f4f4f4" text-anchor="start" font-weight="normal" textLength="52.9" lengthAdjust="spacingAndGlyphs" >0,5131</text><text x="1530.6" y="602.9" font-size="14.3" fill="#f4f4f4" text-anchor="start" font-weight="normal" textLength="52.9" lengthAdjust="spacingAndGlyphs" >0,2117</text><text x="312.0" y="624.8" font-size="14" fill="#f4f4f4" text-anchor="start" font-weight="bold" textLength="67.0" lengthAdjust="spacingAndGlyphs" >y: CIE31</text><text x="454.2" y="624.8" font-size="14.3" fill="#f4f4f4" text-anchor="start" font-weight="normal" textLength="52.9" lengthAdjust="spacingAndGlyphs" >0,3287</text><text x="536.7" y="624.8" font-size="14.3" fill="#f4f4f4" text-anchor="start" font-weight="normal" textLength="52.9" lengthAdjust="spacingAndGlyphs" >0,3285</text><text x="619.2" y="624.8" font-size="14.3" fill="#f4f4f4" text-anchor="start" font-weight="normal" textLength="52.9" lengthAdjust="spacingAndGlyphs" >0,3291</text><text x="701.7" y="624.8" font-size="14.3" fill="#f4f4f4" text-anchor="start" font-weight="normal" textLength="52.9" lengthAdjust="spacingAndGlyphs" >0,3298</text><text x="784.7" y="624.8" font-size="14.3" fill="#f4f4f4" text-anchor="start" font-weight="normal" textLength="52.9" lengthAdjust="spacingAndGlyphs" >0,3289</text><text x="866.8" y="624.8" font-size="14.3" fill="#f4f4f4" text-anchor="start" font-weight="normal" textLength="52.9" lengthAdjust="spacingAndGlyphs" >0,2740</text><text x="939.7" y="624.8" font-size="14.3" fill="#f4f4f4" text-anchor="start" font-weight="normal" textLength="52.9" lengthAdjust="spacingAndGlyphs" >0,3610</text><text x="1018.4" y="624.8" font-size="14.3" fill="#f4f4f4" text-anchor="start" font-weight="normal" textLength="52.9" lengthAdjust="spacingAndGlyphs" >0,3544</text><text x="1101.6" y="624.8" font-size="14.3" fill="#f4f4f4" text-anchor="start" font-weight="normal" textLength="52.9" lengthAdjust="spacingAndGlyphs" >0,2652</text><text x="1174.0" y="624.8" font-size="14.3" fill="#f4f4f4" text-anchor="start" font-weight="normal" textLength="52.9" lengthAdjust="spacingAndGlyphs" >0,4300</text><text x="1246.6" y="624.8" font-size="14.3" fill="#f4f4f4" text-anchor="start" font-weight="normal" textLength="52.9" lengthAdjust="spacingAndGlyphs" >0,2555</text><text x="1344.2" y="624.8" font-size="14.3" fill="#f4f4f4" text-anchor="start" font-weight="normal" textLength="52.9" lengthAdjust="spacingAndGlyphs" >0,3552</text><text x="1447.9" y="624.8" font-size="14.3" fill="#f4f4f4" text-anchor="start" font-weight="normal" textLength="52.9" lengthAdjust="spacingAndGlyphs" >0,4084</text><text x="1530.6" y="624.8" font-size="14.3" fill="#f4f4f4" text-anchor="start" font-weight="normal" textLength="52.9" lengthAdjust="spacingAndGlyphs" >0,1948</text><text x="312.0" y="646.8" font-size="14" fill="#f4f4f4" text-anchor="start" font-weight="bold" textLength="11.0" lengthAdjust="spacingAndGlyphs" >Y</text><text x="454.2" y="646.8" font-size="14.3" fill="#f4f4f4" text-anchor="start" font-weight="normal" textLength="72.7" lengthAdjust="spacingAndGlyphs" >461,2720</text><text x="536.7" y="646.8" font-size="14.3" fill="#f4f4f4" text-anchor="start" font-weight="normal" textLength="72.7" lengthAdjust="spacingAndGlyphs" >368,7367</text><text x="619.2" y="646.8" font-size="14.3" fill="#f4f4f4" text-anchor="start" font-weight="normal" textLength="72.7" lengthAdjust="spacingAndGlyphs" >299,4972</text><text x="701.7" y="646.8" font-size="14.3" fill="#f4f4f4" text-anchor="start" font-weight="normal" textLength="72.7" lengthAdjust="spacingAndGlyphs" >231,1096</text><text x="784.7" y="646.8" font-size="14.3" fill="#f4f4f4" text-anchor="start" font-weight="normal" textLength="72.7" lengthAdjust="spacingAndGlyphs" >161,1263</text><text x="866.8" y="646.8" font-size="14.3" fill="#f4f4f4" text-anchor="start" font-weight="normal" textLength="52.9" lengthAdjust="spacingAndGlyphs" >0,3503</text><text x="939.7" y="646.8" font-size="14.3" fill="#f4f4f4" text-anchor="start" font-weight="normal" textLength="62.8" lengthAdjust="spacingAndGlyphs" >45,7497</text><text x="1018.4" y="646.8" font-size="14.3" fill="#f4f4f4" text-anchor="start" font-weight="normal" textLength="72.7" lengthAdjust="spacingAndGlyphs" >163,5576</text><text x="1101.6" y="646.8" font-size="14.3" fill="#f4f4f4" text-anchor="start" font-weight="normal" textLength="62.8" lengthAdjust="spacingAndGlyphs" >87,6627</text><text x="1174.0" y="646.8" font-size="14.3" fill="#f4f4f4" text-anchor="start" font-weight="normal" textLength="62.8" lengthAdjust="spacingAndGlyphs" >61,0031</text><text x="1246.6" y="646.8" font-size="14.3" fill="#f4f4f4" text-anchor="start" font-weight="normal" textLength="72.7" lengthAdjust="spacingAndGlyphs" >108,4993</text><text x="1344.2" y="646.8" font-size="14.3" fill="#f4f4f4" text-anchor="start" font-weight="normal" textLength="72.7" lengthAdjust="spacingAndGlyphs" >193,6742</text><text x="1447.9" y="646.8" font-size="14.3" fill="#f4f4f4" text-anchor="start" font-weight="normal" textLength="72.7" lengthAdjust="spacingAndGlyphs" >137,2748</text><text x="1530.6" y="646.8" font-size="14.3" fill="#f4f4f4" text-anchor="start" font-weight="normal" textLength="62.8" lengthAdjust="spacingAndGlyphs" >53,4521</text><text x="312.0" y="668.7" font-size="14" fill="#f4f4f4" text-anchor="start" font-weight="bold" textLength="121.0" lengthAdjust="spacingAndGlyphs" >Target x:CIE31</text><text x="454.2" y="668.7" font-size="14.3" fill="#f4f4f4" text-anchor="start" font-weight="normal" textLength="52.9" lengthAdjust="spacingAndGlyphs" >0,3127</text><text x="536.7" y="668.7" font-size="14.3" fill="#f4f4f4" text-anchor="start" font-weight="normal" textLength="52.9" lengthAdjust="spacingAndGlyphs" >0,3127</text><text x="619.2" y="668.7" font-size="14.3" fill="#f4f4f4" text-anchor="start" font-weight="normal" textLength="52.9" lengthAdjust="spacingAndGlyphs" >0,3127</text><text x="701.7" y="668.7" font-size="14.3" fill="#f4f4f4" text-anchor="start" font-weight="normal" textLength="52.9" lengthAdjust="spacingAndGlyphs" >0,3127</text><text x="784.7" y="668.7" font-size="14.3" fill="#f4f4f4" text-anchor="start" font-weight="normal" textLength="52.9" lengthAdjust="spacingAndGlyphs" >0,3127</text><text x="866.8" y="668.7" font-size="14.3" fill="#f4f4f4" text-anchor="start" font-weight="normal" textLength="52.9" lengthAdjust="spacingAndGlyphs" >0,3127</text><text x="939.7" y="668.7" font-size="14.3" fill="#f4f4f4" text-anchor="start" font-weight="normal" textLength="52.9" lengthAdjust="spacingAndGlyphs" >0,4064</text><text x="1018.4" y="668.7" font-size="14.3" fill="#f4f4f4" text-anchor="start" font-weight="normal" textLength="52.9" lengthAdjust="spacingAndGlyphs" >0,3787</text><text x="1101.6" y="668.7" font-size="14.3" fill="#f4f4f4" text-anchor="start" font-weight="normal" textLength="52.9" lengthAdjust="spacingAndGlyphs" >0,2478</text><text x="1174.0" y="668.7" font-size="14.3" fill="#f4f4f4" text-anchor="start" font-weight="normal" textLength="52.9" lengthAdjust="spacingAndGlyphs" >0,3388</text><text x="1246.6" y="668.7" font-size="14.3" fill="#f4f4f4" text-anchor="start" font-weight="normal" textLength="52.9" lengthAdjust="spacingAndGlyphs" >0,2673</text><text x="1344.2" y="668.7" font-size="14.3" fill="#f4f4f4" text-anchor="start" font-weight="normal" textLength="52.9" lengthAdjust="spacingAndGlyphs" >0,2613</text><text x="1447.9" y="668.7" font-size="14.3" fill="#f4f4f4" text-anchor="start" font-weight="normal" textLength="52.9" lengthAdjust="spacingAndGlyphs" >0,5140</text><text x="1530.6" y="668.7" font-size="14.3" fill="#f4f4f4" text-anchor="start" font-weight="normal" textLength="52.9" lengthAdjust="spacingAndGlyphs" >0,2128</text><text x="312.0" y="690.6" font-size="14" fill="#f4f4f4" text-anchor="start" font-weight="bold" textLength="121.0" lengthAdjust="spacingAndGlyphs" >Target y:CIE31</text><text x="454.2" y="690.6" font-size="14.3" fill="#f4f4f4" text-anchor="start" font-weight="normal" textLength="52.9" lengthAdjust="spacingAndGlyphs" >0,3290</text><text x="536.7" y="690.6" font-size="14.3" fill="#f4f4f4" text-anchor="start" font-weight="normal" textLength="52.9" lengthAdjust="spacingAndGlyphs" >0,3290</text><text x="619.2" y="690.6" font-size="14.3" fill="#f4f4f4" text-anchor="start" font-weight="normal" textLength="52.9" lengthAdjust="spacingAndGlyphs" >0,3290</text><text x="701.7" y="690.6" font-size="14.3" fill="#f4f4f4" text-anchor="start" font-weight="normal" textLength="52.9" lengthAdjust="spacingAndGlyphs" >0,3290</text><text x="784.7" y="690.6" font-size="14.3" fill="#f4f4f4" text-anchor="start" font-weight="normal" textLength="52.9" lengthAdjust="spacingAndGlyphs" >0,3290</text><text x="866.8" y="690.6" font-size="14.3" fill="#f4f4f4" text-anchor="start" font-weight="normal" textLength="52.9" lengthAdjust="spacingAndGlyphs" >0,3290</text><text x="939.7" y="690.6" font-size="14.3" fill="#f4f4f4" text-anchor="start" font-weight="normal" textLength="52.9" lengthAdjust="spacingAndGlyphs" >0,3615</text><text x="1018.4" y="690.6" font-size="14.3" fill="#f4f4f4" text-anchor="start" font-weight="normal" textLength="52.9" lengthAdjust="spacingAndGlyphs" >0,3539</text><text x="1101.6" y="690.6" font-size="14.3" fill="#f4f4f4" text-anchor="start" font-weight="normal" textLength="52.9" lengthAdjust="spacingAndGlyphs" >0,2664</text><text x="1174.0" y="690.6" font-size="14.3" fill="#f4f4f4" text-anchor="start" font-weight="normal" textLength="52.9" lengthAdjust="spacingAndGlyphs" >0,4328</text><text x="1246.6" y="690.6" font-size="14.3" fill="#f4f4f4" text-anchor="start" font-weight="normal" textLength="52.9" lengthAdjust="spacingAndGlyphs" >0,2539</text><text x="1344.2" y="690.6" font-size="14.3" fill="#f4f4f4" text-anchor="start" font-weight="normal" textLength="52.9" lengthAdjust="spacingAndGlyphs" >0,3558</text><text x="1447.9" y="690.6" font-size="14.3" fill="#f4f4f4" text-anchor="start" font-weight="normal" textLength="52.9" lengthAdjust="spacingAndGlyphs" >0,4089</text><text x="1530.6" y="690.6" font-size="14.3" fill="#f4f4f4" text-anchor="start" font-weight="normal" textLength="52.9" lengthAdjust="spacingAndGlyphs" >0,1869</text><text x="312.0" y="712.5" font-size="14" fill="#f4f4f4" text-anchor="start" font-weight="bold" textLength="71.0" lengthAdjust="spacingAndGlyphs" >Target Y</text><text x="454.2" y="712.5" font-size="14.3" fill="#f4f4f4" text-anchor="start" font-weight="normal" textLength="72.7" lengthAdjust="spacingAndGlyphs" >461,2720</text><text x="536.7" y="712.5" font-size="14.3" fill="#f4f4f4" text-anchor="start" font-weight="normal" textLength="72.7" lengthAdjust="spacingAndGlyphs" >367,6961</text><text x="619.2" y="712.5" font-size="14.3" fill="#f4f4f4" text-anchor="start" font-weight="normal" textLength="72.7" lengthAdjust="spacingAndGlyphs" >297,9470</text><text x="701.7" y="712.5" font-size="14.3" fill="#f4f4f4" text-anchor="start" font-weight="normal" textLength="72.7" lengthAdjust="spacingAndGlyphs" >230,6399</text><text x="784.7" y="712.5" font-size="14.3" fill="#f4f4f4" text-anchor="start" font-weight="normal" textLength="72.7" lengthAdjust="spacingAndGlyphs" >161,2098</text><text x="866.8" y="712.5" font-size="14.3" fill="#f4f4f4" text-anchor="start" font-weight="normal" textLength="52.9" lengthAdjust="spacingAndGlyphs" >0,3503</text><text x="939.7" y="712.5" font-size="14.3" fill="#f4f4f4" text-anchor="start" font-weight="normal" textLength="62.8" lengthAdjust="spacingAndGlyphs" >45,3234</text><text x="1018.4" y="712.5" font-size="14.3" fill="#f4f4f4" text-anchor="start" font-weight="normal" textLength="72.7" lengthAdjust="spacingAndGlyphs" >161,0717</text><text x="1101.6" y="712.5" font-size="14.3" fill="#f4f4f4" text-anchor="start" font-weight="normal" textLength="62.8" lengthAdjust="spacingAndGlyphs" >88,4193</text><text x="1174.0" y="712.5" font-size="14.3" fill="#f4f4f4" text-anchor="start" font-weight="normal" textLength="62.8" lengthAdjust="spacingAndGlyphs" >60,9782</text><text x="1246.6" y="712.5" font-size="14.3" fill="#f4f4f4" text-anchor="start" font-weight="normal" textLength="72.7" lengthAdjust="spacingAndGlyphs" >108,7352</text><text x="1344.2" y="712.5" font-size="14.3" fill="#f4f4f4" text-anchor="start" font-weight="normal" textLength="72.7" lengthAdjust="spacingAndGlyphs" >195,6828</text><text x="1447.9" y="712.5" font-size="14.3" fill="#f4f4f4" text-anchor="start" font-weight="normal" textLength="72.7" lengthAdjust="spacingAndGlyphs" >133,0043</text><text x="1530.6" y="712.5" font-size="14.3" fill="#f4f4f4" text-anchor="start" font-weight="normal" textLength="62.8" lengthAdjust="spacingAndGlyphs" >54,3125</text><text x="312.0" y="734.5" font-size="14" fill="#f4f4f4" text-anchor="start" font-weight="bold" textLength="70.0" lengthAdjust="spacingAndGlyphs" >ΔE 2000</text><text x="454.2" y="734.5" font-size="14.3" fill="#f4f4f4" text-anchor="start" font-weight="normal" textLength="52.9" lengthAdjust="spacingAndGlyphs" >0,5750</text><text x="536.7" y="734.5" font-size="14.3" fill="#f4f4f4" text-anchor="start" font-weight="normal" textLength="52.9" lengthAdjust="spacingAndGlyphs" >0,4343</text><text x="619.2" y="734.5" font-size="14.3" fill="#f4f4f4" text-anchor="start" font-weight="normal" textLength="52.9" lengthAdjust="spacingAndGlyphs" >0,4393</text><text x="701.7" y="734.5" font-size="14.3" fill="#f4f4f4" text-anchor="start" font-weight="normal" textLength="52.9" lengthAdjust="spacingAndGlyphs" >0,3767</text><text x="784.7" y="734.5" font-size="14.3" fill="#f4f4f4" text-anchor="start" font-weight="normal" textLength="52.9" lengthAdjust="spacingAndGlyphs" >0,2101</text><text x="866.8" y="734.5" font-size="14.3" fill="#f4f4f4" text-anchor="start" font-weight="normal" textLength="52.9" lengthAdjust="spacingAndGlyphs" >0,6362</text><text x="939.7" y="734.5" font-size="14.3" fill="#f4f4f4" text-anchor="start" font-weight="normal" textLength="52.9" lengthAdjust="spacingAndGlyphs" >0,6446</text><text x="1018.4" y="734.5" font-size="14.3" fill="#f4f4f4" text-anchor="start" font-weight="normal" textLength="52.9" lengthAdjust="spacingAndGlyphs" >0,4210</text><text x="1101.6" y="734.5" font-size="14.3" fill="#f4f4f4" text-anchor="start" font-weight="normal" textLength="52.9" lengthAdjust="spacingAndGlyphs" >0,2536</text><text x="1174.0" y="734.5" font-size="14.3" fill="#f4f4f4" text-anchor="start" font-weight="normal" textLength="52.9" lengthAdjust="spacingAndGlyphs" >0,5903</text><text x="1246.6" y="734.5" font-size="14.3" fill="#f4f4f4" text-anchor="start" font-weight="normal" textLength="52.9" lengthAdjust="spacingAndGlyphs" >0,5137</text><text x="1344.2" y="734.5" font-size="14.3" fill="#f4f4f4" text-anchor="start" font-weight="normal" textLength="52.9" lengthAdjust="spacingAndGlyphs" >0,3195</text><text x="1447.9" y="734.5" font-size="14.3" fill="#f4f4f4" text-anchor="start" font-weight="normal" textLength="52.9" lengthAdjust="spacingAndGlyphs" >0,7117</text><text x="1530.6" y="734.5" font-size="14.3" fill="#f4f4f4" text-anchor="start" font-weight="normal" textLength="52.9" lengthAdjust="spacingAndGlyphs" >0,7041</text><text x="312.0" y="756.4" font-size="14" fill="#f4f4f4" text-anchor="start" font-weight="bold" textLength="55.5" lengthAdjust="spacingAndGlyphs" >ΔE ITP</text><text x="454.2" y="756.4" font-size="14.3" fill="#f4f4f4" text-anchor="start" font-weight="normal" textLength="52.9" lengthAdjust="spacingAndGlyphs" >0,3899</text><text x="536.7" y="756.4" font-size="14.3" fill="#f4f4f4" text-anchor="start" font-weight="normal" textLength="52.9" lengthAdjust="spacingAndGlyphs" >0,3556</text><text x="619.2" y="756.4" font-size="14.3" fill="#f4f4f4" text-anchor="start" font-weight="normal" textLength="52.9" lengthAdjust="spacingAndGlyphs" >0,5971</text><text x="701.7" y="756.4" font-size="14.3" fill="#f4f4f4" text-anchor="start" font-weight="normal" textLength="52.9" lengthAdjust="spacingAndGlyphs" >0,3340</text><text x="784.7" y="756.4" font-size="14.3" fill="#f4f4f4" text-anchor="start" font-weight="normal" textLength="52.9" lengthAdjust="spacingAndGlyphs" >0,2228</text><text x="866.8" y="756.4" font-size="14.3" fill="#f4f4f4" text-anchor="start" font-weight="normal" textLength="62.8" lengthAdjust="spacingAndGlyphs" >11,0452</text><text x="939.7" y="756.4" font-size="14.3" fill="#f4f4f4" text-anchor="start" font-weight="normal" textLength="52.9" lengthAdjust="spacingAndGlyphs" >2,2251</text><text x="1018.4" y="756.4" font-size="14.3" fill="#f4f4f4" text-anchor="start" font-weight="normal" textLength="52.9" lengthAdjust="spacingAndGlyphs" >1,1819</text><text x="1101.6" y="756.4" font-size="14.3" fill="#f4f4f4" text-anchor="start" font-weight="normal" textLength="52.9" lengthAdjust="spacingAndGlyphs" >0,8459</text><text x="1174.0" y="756.4" font-size="14.3" fill="#f4f4f4" text-anchor="start" font-weight="normal" textLength="52.9" lengthAdjust="spacingAndGlyphs" >1,6158</text><text x="1246.6" y="756.4" font-size="14.3" fill="#f4f4f4" text-anchor="start" font-weight="normal" textLength="52.9" lengthAdjust="spacingAndGlyphs" >1,0336</text><text x="1344.2" y="756.4" font-size="14.3" fill="#f4f4f4" text-anchor="start" font-weight="normal" textLength="52.9" lengthAdjust="spacingAndGlyphs" >0,9960</text><text x="1447.9" y="756.4" font-size="14.3" fill="#f4f4f4" text-anchor="start" font-weight="normal" textLength="52.9" lengthAdjust="spacingAndGlyphs" >2,3727</text><text x="1530.6" y="756.4" font-size="14.3" fill="#f4f4f4" text-anchor="start" font-weight="normal" textLength="52.9" lengthAdjust="spacingAndGlyphs" >2,4512</text><rect x="299" y="761.3" width="1260" height="13.7" fill="#5c5c5c"/><rect x="300" y="762.5" width="15" height="11.5" rx="2" fill="#7a7a7a"/><path d="M303.5,768.2 L309.5,764.5 L309.5,772 Z" fill="#333"/><rect x="319" y="762.6" width="368" height="11" rx="5.5" fill="#404040"/><rect x="1541" y="762.5" width="15" height="11.5" rx="2" fill="#7a7a7a"/><path d="M1552,768.2 L1546,764.5 L1546,772 Z" fill="#333"/><rect x="0" y="797" width="1239" height="51" fill="#2e2e2e"/><path d="M-7.0,847.5 L-7.0,803 Q-7.0,799 -3.0,799 L39.0,799 Q43.0,799 43.0,803 L43.0,847.5 Z" fill="url(#tabg)"/><rect x="-1.7" y="803.9" width="40.2" height="24.2" rx="3.5" fill="#2a8ab0" stroke="rgba(0,0,0,0.18)" stroke-width="0.8"/><text x="18.0" y="843.0" font-size="12" fill="#2a2a2a" text-anchor="middle" font-weight="normal" stroke="#2a2a2a" stroke-width="0.35">Cyan</text><path d="M42.0,847.5 Q44.2,843 44.2,838 Q44.2,843 46.5,847.5 Z" fill="#2e2e2e"/><path d="M45.0,847.5 L45.0,803 Q45.0,799 49.0,799 L91.0,799 Q95.0,799 95.0,803 L95.0,847.5 Z" fill="url(#tabg)"/><rect x="50.3" y="803.9" width="40.2" height="24.2" rx="3.5" fill="#ff0000" stroke="rgba(0,0,0,0.18)" stroke-width="0.8"/><text x="70.0" y="843.0" font-size="12" fill="#2a2a2a" text-anchor="middle" font-weight="normal" textLength="46.5" lengthAdjust="spacingAndGlyphs" stroke="#2a2a2a" stroke-width="0.35">100% Red</text><path d="M94.0,847.5 Q96.2,843 96.2,838 Q96.2,843 98.5,847.5 Z" fill="#2e2e2e"/><path d="M97.0,847.5 L97.0,803 Q97.0,799 101.0,799 L142.9,799 Q146.9,799 146.9,803 L146.9,847.5 Z" fill="url(#tabg)"/><rect x="102.2" y="803.9" width="40.2" height="12.3" rx="3.5" fill="#00ff00" stroke="rgba(0,0,0,0.18)" stroke-width="0.8"/><text x="122.0" y="830.8" font-size="12" fill="#2a2a2a" text-anchor="middle" font-weight="normal" stroke="#2a2a2a" stroke-width="0.35">100%</text><text x="122.0" y="843.0" font-size="12" fill="#2a2a2a" text-anchor="middle" font-weight="normal" stroke="#2a2a2a" stroke-width="0.35">Green</text><path d="M145.9,847.5 Q148.1,843 148.1,838 Q148.1,843 150.4,847.5 Z" fill="#2e2e2e"/><path d="M148.9,847.5 L148.9,803 Q148.9,799 152.9,799 L194.9,799 Q198.9,799 198.9,803 L198.9,847.5 Z" fill="url(#tabg)"/><rect x="154.2" y="803.9" width="40.2" height="12.3" rx="3.5" fill="#0000ff" stroke="rgba(0,0,0,0.18)" stroke-width="0.8"/><text x="173.9" y="830.8" font-size="12" fill="#2a2a2a" text-anchor="middle" font-weight="normal" stroke="#2a2a2a" stroke-width="0.35">100%</text><text x="173.9" y="843.0" font-size="12" fill="#2a2a2a" text-anchor="middle" font-weight="normal" stroke="#2a2a2a" stroke-width="0.35">Blue</text><path d="M197.9,847.5 Q200.1,843 200.1,838 Q200.1,843 202.4,847.5 Z" fill="#2e2e2e"/><path d="M200.9,847.5 L200.9,803 Q200.9,799 204.9,799 L246.9,799 Q250.9,799 250.9,803 L250.9,847.5 Z" fill="url(#tabg)"/><rect x="206.2" y="803.9" width="40.2" height="12.3" rx="3.5" fill="#00ffff" stroke="rgba(0,0,0,0.18)" stroke-width="0.8"/><text x="225.9" y="830.8" font-size="12" fill="#2a2a2a" text-anchor="middle" font-weight="normal" stroke="#2a2a2a" stroke-width="0.35">100%</text><text x="225.9" y="843.0" font-size="12" fill="#2a2a2a" text-anchor="middle" font-weight="normal" stroke="#2a2a2a" stroke-width="0.35">Cyan</text><path d="M249.9,847.5 Q252.1,843 252.1,838 Q252.1,843 254.4,847.5 Z" fill="#2e2e2e"/><path d="M252.8,847.5 L252.8,803 Q252.8,799 256.8,799 L298.8,799 Q302.8,799 302.8,803 L302.8,847.5 Z" fill="url(#tabg)"/><rect x="258.1" y="803.9" width="40.2" height="12.3" rx="3.5" fill="#ff00ff" stroke="rgba(0,0,0,0.18)" stroke-width="0.8"/><text x="277.8" y="830.8" font-size="12" fill="#2a2a2a" text-anchor="middle" font-weight="normal" stroke="#2a2a2a" stroke-width="0.35">100%</text><text x="277.8" y="843.0" font-size="12" fill="#2a2a2a" text-anchor="middle" font-weight="normal" stroke="#2a2a2a" stroke-width="0.35">Magenta</text><path d="M301.8,847.5 Q304.0,843 304.0,838 Q304.0,843 306.3,847.5 Z" fill="#2e2e2e"/><path d="M304.8,847.5 L304.8,803 Q304.8,799 308.8,799 L350.8,799 Q354.8,799 354.8,803 L354.8,847.5 Z" fill="url(#tabg)"/><rect x="310.1" y="803.9" width="40.2" height="12.3" rx="3.5" fill="#ffff00" stroke="rgba(0,0,0,0.18)" stroke-width="0.8"/><text x="329.8" y="830.8" font-size="12" fill="#2a2a2a" text-anchor="middle" font-weight="normal" stroke="#2a2a2a" stroke-width="0.35">100%</text><text x="329.8" y="843.0" font-size="12" fill="#2a2a2a" text-anchor="middle" font-weight="normal" stroke="#2a2a2a" stroke-width="0.35">Yellow</text><path d="M353.8,847.5 Q355.9,843 355.9,838 Q355.9,843 358.2,847.5 Z" fill="#2e2e2e"/><path d="M356.7,847.5 L356.7,803 Q356.7,799 360.7,799 L402.7,799 Q406.7,799 406.7,803 L406.7,847.5 Z" fill="url(#tabg)"/><rect x="362.0" y="803.9" width="40.2" height="24.2" rx="3.5" fill="#6e4630" stroke="rgba(0,0,0,0.18)" stroke-width="0.8"/><text x="381.7" y="843.0" font-size="12" fill="#2a2a2a" text-anchor="middle" font-weight="normal" stroke="#2a2a2a" stroke-width="0.35">2E</text><path d="M405.7,847.5 Q407.9,843 407.9,838 Q407.9,843 410.2,847.5 Z" fill="#2e2e2e"/><path d="M408.7,847.5 L408.7,803 Q408.7,799 412.7,799 L454.7,799 Q458.7,799 458.7,803 L458.7,847.5 Z" fill="url(#tabg)"/><rect x="414.0" y="803.9" width="40.2" height="24.2" rx="3.5" fill="#c48a68" stroke="rgba(0,0,0,0.18)" stroke-width="0.8"/><text x="433.7" y="843.0" font-size="12" fill="#2a2a2a" text-anchor="middle" font-weight="normal" stroke="#2a2a2a" stroke-width="0.35">2F</text><path d="M457.7,847.5 Q459.9,843 459.9,838 Q459.9,843 462.2,847.5 Z" fill="#2e2e2e"/><path d="M460.6,847.5 L460.6,803 Q460.6,799 464.6,799 L506.6,799 Q510.6,799 510.6,803 L510.6,847.5 Z" fill="url(#tabg)"/><rect x="465.9" y="803.9" width="40.2" height="24.2" rx="3.5" fill="#f4c89a" stroke="rgba(0,0,0,0.18)" stroke-width="0.8"/><text x="485.6" y="843.0" font-size="12" fill="#2a2a2a" text-anchor="middle" font-weight="normal" stroke="#2a2a2a" stroke-width="0.35">2K</text><path d="M509.6,847.5 Q511.8,843 511.8,838 Q511.8,843 514.1,847.5 Z" fill="#2e2e2e"/><path d="M512.5,847.5 L512.5,803 Q512.5,799 516.5,799 L558.5,799 Q562.5,799 562.5,803 L562.5,847.5 Z" fill="url(#tabg)"/><rect x="517.8" y="803.9" width="40.2" height="24.2" rx="3.5" fill="#f4c8b0" stroke="rgba(0,0,0,0.18)" stroke-width="0.8"/><text x="537.5" y="843.0" font-size="12" fill="#2a2a2a" text-anchor="middle" font-weight="normal" stroke="#2a2a2a" stroke-width="0.35">5D</text><path d="M561.5,847.5 Q563.8,843 563.8,838 Q563.8,843 566.0,847.5 Z" fill="#2e2e2e"/><path d="M564.5,847.5 L564.5,803 Q564.5,799 568.5,799 L610.5,799 Q614.5,799 614.5,803 L614.5,847.5 Z" fill="url(#tabg)"/><rect x="569.8" y="803.9" width="40.2" height="24.2" rx="3.5" fill="#e8a478" stroke="rgba(0,0,0,0.18)" stroke-width="0.8"/><text x="589.5" y="843.0" font-size="12" fill="#2a2a2a" text-anchor="middle" font-weight="normal" stroke="#2a2a2a" stroke-width="0.35">7E</text><path d="M613.5,847.5 Q615.7,843 615.7,838 Q615.7,843 618.0,847.5 Z" fill="#2e2e2e"/><path d="M616.5,847.5 L616.5,803 Q616.5,799 620.5,799 L662.5,799 Q666.5,799 666.5,803 L666.5,847.5 Z" fill="url(#tabg)"/><rect x="621.8" y="803.9" width="40.2" height="24.2" rx="3.5" fill="#c69464" stroke="rgba(0,0,0,0.18)" stroke-width="0.8"/><text x="641.5" y="843.0" font-size="12" fill="#2a2a2a" text-anchor="middle" font-weight="normal" stroke="#2a2a2a" stroke-width="0.35">7F</text><path d="M665.5,847.5 Q667.7,843 667.7,838 Q667.7,843 670.0,847.5 Z" fill="#2e2e2e"/><path d="M668.4,847.5 L668.4,803 Q668.4,799 672.4,799 L714.4,799 Q718.4,799 718.4,803 L718.4,847.5 Z" fill="url(#tabg)"/><rect x="673.7" y="803.9" width="40.2" height="24.2" rx="3.5" fill="#8c5e38" stroke="rgba(0,0,0,0.18)" stroke-width="0.8"/><text x="693.4" y="843.0" font-size="12" fill="#2a2a2a" text-anchor="middle" font-weight="normal" stroke="#2a2a2a" stroke-width="0.35">7G</text><path d="M717.4,847.5 Q719.6,843 719.6,838 Q719.6,843 721.9,847.5 Z" fill="#2e2e2e"/><path d="M720.4,847.5 L720.4,803 Q720.4,799 724.4,799 L766.4,799 Q770.4,799 770.4,803 L770.4,847.5 Z" fill="url(#tabg)"/><rect x="725.6" y="803.9" width="40.2" height="24.2" rx="3.5" fill="#d4a07a" stroke="rgba(0,0,0,0.18)" stroke-width="0.8"/><text x="745.4" y="843.0" font-size="12" fill="#2a2a2a" text-anchor="middle" font-weight="normal" stroke="#2a2a2a" stroke-width="0.35">7H</text><path d="M769.4,847.5 Q771.6,843 771.6,838 Q771.6,843 773.9,847.5 Z" fill="#2e2e2e"/><path d="M772.3,847.5 L772.3,803 Q772.3,799 776.3,799 L818.3,799 Q822.3,799 822.3,803 L822.3,847.5 Z" fill="url(#tabg)"/><rect x="777.6" y="803.9" width="40.2" height="24.2" rx="3.5" fill="#9a5a2e" stroke="rgba(0,0,0,0.18)" stroke-width="0.8"/><text x="797.3" y="843.0" font-size="12" fill="#2a2a2a" text-anchor="middle" font-weight="normal" stroke="#2a2a2a" stroke-width="0.35">7I</text><path d="M821.3,847.5 Q823.5,843 823.5,838 Q823.5,843 825.8,847.5 Z" fill="#2e2e2e"/><path d="M824.2,847.5 L824.2,803 Q824.2,799 828.2,799 L870.2,799 Q874.2,799 874.2,803 L874.2,847.5 Z" fill="url(#tabg)"/><rect x="829.5" y="803.9" width="40.2" height="24.2" rx="3.5" fill="#ce8a68" stroke="rgba(0,0,0,0.18)" stroke-width="0.8"/><text x="849.2" y="843.0" font-size="12" fill="#2a2a2a" text-anchor="middle" font-weight="normal" stroke="#2a2a2a" stroke-width="0.35">7J</text><path d="M873.2,847.5 Q875.5,843 875.5,838 Q875.5,843 877.8,847.5 Z" fill="#2e2e2e"/><path d="M876.2,847.5 L876.2,803 Q876.2,799 880.2,799 L922.2,799 Q926.2,799 926.2,803 L926.2,847.5 Z" fill="url(#tabg)"/><rect x="881.5" y="803.9" width="40.2" height="24.2" rx="3.5" fill="#cc8e70" stroke="rgba(0,0,0,0.18)" stroke-width="0.8"/><text x="901.2" y="843.0" font-size="12" fill="#2a2a2a" text-anchor="middle" font-weight="normal" stroke="#2a2a2a" stroke-width="0.35">8D</text><path d="M925.2,847.5 Q927.4,843 927.4,838 Q927.4,843 929.7,847.5 Z" fill="#2e2e2e"/><path d="M928.2,847.5 L928.2,803 Q928.2,799 932.2,799 L974.2,799 Q978.2,799 978.2,803 L978.2,847.5 Z" fill="url(#tabg)"/><rect x="933.5" y="803.9" width="40.2" height="24.2" rx="3.5" fill="#ea9c78" stroke="rgba(0,0,0,0.18)" stroke-width="0.8"/><text x="953.2" y="843.0" font-size="12" fill="#2a2a2a" text-anchor="middle" font-weight="normal" stroke="#2a2a2a" stroke-width="0.35">8E</text><path d="M977.2,847.5 Q979.4,843 979.4,838 Q979.4,843 981.7,847.5 Z" fill="#2e2e2e"/><path d="M980.1,847.5 L980.1,803 Q980.1,799 984.1,799 L1026.1,799 Q1030.1,799 1030.1,803 L1030.1,847.5 Z" fill="url(#tabg)"/><rect x="985.4" y="803.9" width="40.2" height="24.2" rx="3.5" fill="#c69472" stroke="rgba(0,0,0,0.18)" stroke-width="0.8"/><text x="1005.1" y="843.0" font-size="12" fill="#2a2a2a" text-anchor="middle" font-weight="normal" stroke="#2a2a2a" stroke-width="0.35">8F</text><path d="M1029.1,847.5 Q1031.3,843 1031.3,838 Q1031.3,843 1033.6,847.5 Z" fill="#2e2e2e"/><path d="M1032.1,847.5 L1032.1,803 Q1032.1,799 1036.1,799 L1078.1,799 Q1082.1,799 1082.1,803 L1082.1,847.5 Z" fill="url(#tabg)"/><rect x="1037.4" y="803.9" width="40.2" height="24.2" rx="3.5" fill="#c69070" stroke="rgba(0,0,0,0.18)" stroke-width="0.8"/><text x="1057.1" y="843.0" font-size="12" fill="#2a2a2a" text-anchor="middle" font-weight="normal" stroke="#2a2a2a" stroke-width="0.35">8G</text><path d="M1081.1,847.5 Q1083.3,843 1083.3,838 Q1083.3,843 1085.6,847.5 Z" fill="#2e2e2e"/><path d="M1084.0,847.5 L1084.0,803 Q1084.0,799 1088.0,799 L1130.0,799 Q1134.0,799 1134.0,803 L1134.0,847.5 Z" fill="url(#tabg)"/><rect x="1089.3" y="803.9" width="40.2" height="24.2" rx="3.5" fill="#cc9470" stroke="rgba(0,0,0,0.18)" stroke-width="0.8"/><text x="1109.0" y="843.0" font-size="12" fill="#2a2a2a" text-anchor="middle" font-weight="normal" stroke="#2a2a2a" stroke-width="0.35">8H</text><path d="M1133.0,847.5 Q1135.2,843 1135.2,838 Q1135.2,843 1137.5,847.5 Z" fill="#2e2e2e"/><path d="M1136.0,847.5 L1136.0,803 Q1136.0,799 1140.0,799 L1182.0,799 Q1186.0,799 1186.0,803 L1186.0,847.5 Z" fill="url(#tabg)"/><rect x="1141.2" y="803.9" width="40.2" height="24.2" rx="3.5" fill="#76502e" stroke="rgba(0,0,0,0.18)" stroke-width="0.8"/><text x="1161.0" y="843.0" font-size="12" fill="#2a2a2a" text-anchor="middle" font-weight="normal" stroke="#2a2a2a" stroke-width="0.35">8I</text><path d="M1185.0,847.5 Q1187.2,843 1187.2,838 Q1187.2,843 1189.5,847.5 Z" fill="#2e2e2e"/><path d="M1187.9,847.5 L1187.9,803 Q1187.9,799 1191.9,799 L1233.9,799 Q1237.9,799 1237.9,803 L1237.9,847.5 Z" fill="#262626"/><rect x="1193.2" y="803.9" width="40.2" height="24.2" rx="3.5" fill="#cf8f66" stroke="rgba(0,0,0,0.18)" stroke-width="0.8"/><text x="1212.9" y="842.6" font-size="12" fill="#ffffff" text-anchor="middle" font-weight="bold" >8J</text><path d="M1236.9,847.5 Q1239.1,843 1239.1,838 Q1239.1,843 1241.4,847.5 Z" fill="#2e2e2e"/><rect x="0" y="847.5" width="1239" height="11.5" fill="#686868"/><rect x="0" y="849" width="8" height="10" rx="1.5" fill="#8a8a8a"/><path d="M1.5,854 L6,850.5 L6,857.5 Z" fill="#333"/><rect x="608.5" y="849.3" width="615" height="12" rx="6" fill="#4a4a4a"/><rect x="1227" y="849" width="10.5" height="10" rx="1.5" fill="#8a8a8a"/><path d="M1235.5,854 L1230,850.5 L1230,857.5 Z" fill="#333"/><rect x="1237.5" y="797" width="321.5" height="62" fill="#2a2a2a"/><path d="M1239,817.2 L1239,803 Q1239,799 1243,799 L1283,799 Q1287,799 1287,803 L1287,817.2 Z" fill="url(#btng)"/><rect x="1239" y="818.2" width="48" height="41" fill="url(#btng2)"/><circle cx="1263.6" cy="807.3" r="7" fill="url(#circg)"/><path d="M1259.6,809.4 L1267.6,809.4 L1263.6,805 Z" fill="#333"/><rect x="1248.2" y="824.2" width="29.3" height="28.7" rx="4" fill="#ababab" stroke="#2a2a2a" stroke-width="2"/><rect x="1249.2" y="839" width="27.3" height="13" fill="#9c9c9c"/><rect x="1256.1" y="832.3" width="13.4" height="13" fill="#111"/><rect x="1287.7" y="798.8" width="46.7" height="30.1" fill="url(#btng)"/><rect x="1335.4" y="798.8" width="44.2" height="30.1" fill="url(#btng)"/><rect x="1380.6" y="798.8" width="43.8" height="30.1" fill="url(#btng)"/><rect x="1425.3" y="798.8" width="43.7" height="30.1" fill="url(#btng)"/><rect x="1469.5" y="798.8" width="45.0" height="30.1" fill="url(#darkg)"/><rect x="1515.5" y="798.8" width="43.5" height="30.1" fill="url(#btng)"/><path d="M1287.7,859 L1287.7,834 Q1287.7,830 1291.7,830 L1424.4,830 L1424.4,859 Z" fill="url(#btng3)"/><rect x="1425.3" y="830" width="133.7" height="29" fill="url(#btng3)"/><circle cx="1310.8" cy="813.8" r="9.8" fill="url(#circg)"/><circle cx="1357.2" cy="813.8" r="9.8" fill="url(#circg)"/><circle cx="1402.5" cy="813.8" r="9.8" fill="url(#circg)"/><circle cx="1446.7" cy="813.8" r="9.8" fill="url(#circg)"/><circle cx="1491.7" cy="813.8" r="9.8" fill="url(#circd)"/><circle cx="1537.6" cy="813.8" r="9.8" fill="url(#circg)"/><circle cx="1318.5" cy="845" r="10" fill="url(#circg)"/><circle cx="1531.9" cy="844.9" r="10" fill="url(#circg)"/><rect x="1307" y="810" width="8" height="8" fill="#2a2a2a"/><path d="M1354.2,808.5 L1362.3,813.8 L1354.2,819.3 Z" fill="#2a2a2a"/><path d="M1399,809.6 L1396.9,809.6 L1396.9,819.2 L1399,819.2 M1405.3,809.6 L1407.4,809.6 L1407.4,819.2 L1405.3,819.2" stroke="#262626" stroke-width="2.2" fill="none"/><rect x="1399.1" y="813.3" width="2" height="1.9" fill="#262626"/><rect x="1402" y="813.3" width="2" height="1.9" fill="#262626"/><path d="M1446.7,813.8 C1444,810 1440.5,810.8 1440.5,813.8 C1440.5,816.8 1444,817.6 1446.7,813.8 C1449.4,810 1452.9,810.8 1452.9,813.8 C1452.9,816.8 1449.4,817.6 1446.7,813.8 Z" stroke="#222" stroke-width="1.4" fill="none"/><path d="M1496,811 A5,5 0 0 0 1487,812.5 M1487.5,816.5 A5,5 0 0 0 1496.5,815" stroke="#1e1e1e" stroke-width="2" fill="none"/><path d="M1497.5,808.5 L1497.5,813 L1493,812 Z M1486,819 L1486,814.5 L1490.5,815.5 Z" fill="#1e1e1e"/><path d="M1320,841 L1316,845 L1320,849 M1323.5,841 L1319.5,845 L1323.5,849" stroke="#2a2a2a" stroke-width="1.3" fill="none"/><path d="M1528.5,841 L1532.5,845 L1528.5,849 M1532,841 L1536,845 L1532,849" stroke="#2a2a2a" stroke-width="1.3" fill="none"/><text x="1345.5" y="852.7" font-size="21.5" fill="#2c2c2c" text-anchor="start" font-weight="normal" textLength="51.0" lengthAdjust="spacingAndGlyphs" stroke="#2c2c2c" stroke-width="0.6">Back</text><text x="1451.5" y="852.9" font-size="21.5" fill="#2c2c2c" text-anchor="start" font-weight="normal" textLength="53.0" lengthAdjust="spacingAndGlyphs" stroke="#2c2c2c" stroke-width="0.6">Next</text></svg>
</body></html>
